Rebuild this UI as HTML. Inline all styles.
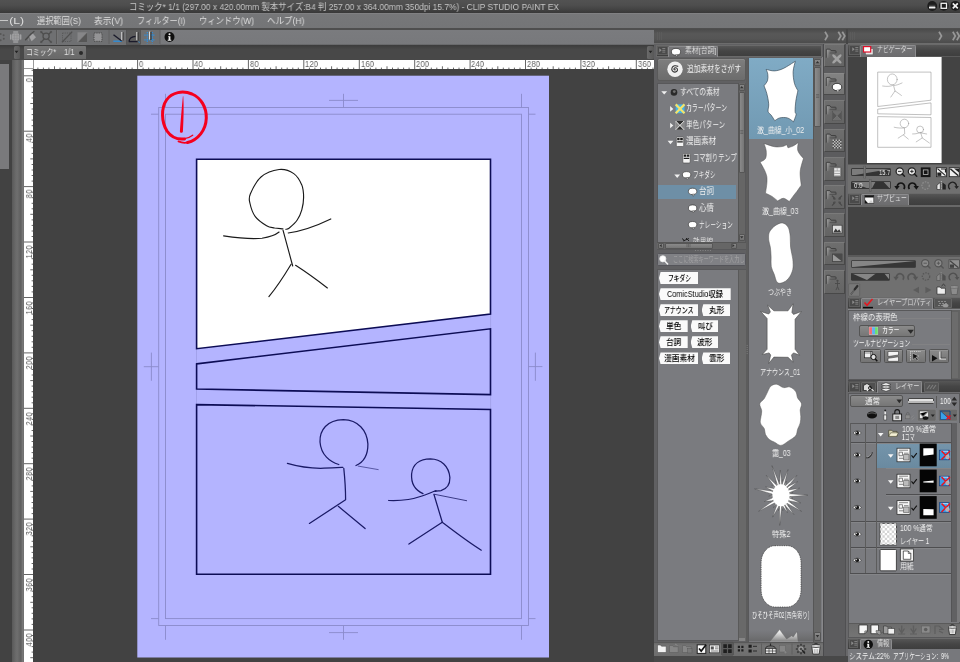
<!DOCTYPE html>
<html lang="ja"><head><meta charset="utf-8"><title>CLIP STUDIO PAINT EX</title>
<style>
*{box-sizing:border-box;margin:0;padding:0}
html,body{width:960px;height:662px;overflow:hidden;background:#424242}
body{font-family:"Liberation Sans","Noto Sans CJK JP",sans-serif;font-size:9px;color:#e4e4e4;position:relative}
.a{position:absolute}
.t{position:absolute;white-space:nowrap;line-height:1;transform-origin:0 0;will-change:transform}
#app{position:absolute;left:0;top:0;width:960px;height:662px;overflow:hidden;background:#424242}
svg{position:absolute;overflow:visible}
</style></head><body><div id="app">
<!-- title bar -->
<div class="a" style="left:0;top:0;width:960px;height:13px;background:linear-gradient(#525252,#4e4e4e 40%,#424242 75%,#383838)"></div>
<div class="t" style="left: 129px; top: 1.5px; font-size: 9.5px; color: rgb(198, 198, 198); transform: scaleX(0.8828);">コミック* 1/1 (297.00 x 420.00mm 製本サイズ:B4 判 257.00 x 364.00mm 350dpi 15.7%) - CLIP STUDIO PAINT EX</div>
<!-- window controls -->
<svg class="a" style="left:900px;top:0" width="60" height="13" viewBox="900 0 60 13">
 <circle cx="932.2" cy="6" r="4.900" fill="#1c1c1c"></circle><rect x="929" y="6.600" width="6.400" height="1.800" rx="0.500" fill="#f2f2f2"></rect><path d="M929 5.300h6.400" stroke="#555" stroke-width="0.700"></path>
 <circle cx="943.800" cy="5.800" r="4.900" fill="#1c1c1c"></circle><rect x="941.100" y="3.300" width="5.400" height="5" fill="none" stroke="#f2f2f2" stroke-width="1.300"></rect>
 <circle cx="955.300" cy="5.800" r="4.900" fill="#1c1c1c"></circle><path d="M952.800 3.300l5 5M957.800 3.300l-5 5" stroke="#f2f2f2" stroke-width="1.700"></path>
</svg>
<!-- menu bar -->
<div class="a" style="left:0;top:13px;width:960px;height:15px;background:linear-gradient(#868688,#767779 9%,#747577)"></div>
<div class="t m" style="left: -3px; top: 16.8px; font-size: 9.2px; color: rgb(222, 222, 222); transform: scaleX(1.3221);">ー(L)</div>
<div class="t m" style="left: 37px; top: 16.8px; font-size: 9.2px; color: rgb(222, 222, 222); transform: scaleX(0.898);">選択範囲(S)</div>
<div class="t m" style="left: 94px; top: 16.8px; font-size: 9.2px; color: rgb(222, 222, 222); transform: scaleX(0.9469);">表示(V)</div>
<div class="t m" style="left: 136.5px; top: 16.8px; font-size: 9.2px; color: rgb(222, 222, 222); transform: scaleX(0.8909);">フィルター(I)</div>
<div class="t m" style="left: 199px; top: 16.8px; font-size: 9.2px; color: rgb(222, 222, 222); transform: scaleX(0.9056);">ウィンドウ(W)</div>
<div class="t m" style="left: 266.5px; top: 16.8px; font-size: 9.2px; color: rgb(222, 222, 222); transform: scaleX(0.9299);">ヘルプ(H)</div>
<!-- toolbar -->
<div class="a" style="left:0;top:28px;width:960px;height:17px;background:linear-gradient(#5a5a5a,#7a7b7e 12%,#78797c 94%,#5c5c5e)"></div>
<!-- toolbar lines + icons -->
<div class="a" style="left:0;top:29.5px;width:160px;height:15px;background:#6f7072"></div>
<div class="a" style="left:0;top:28px;width:960px;height:1.5px;background:#4e4e4e"></div>
<div class="a" style="left:0;top:44.5px;width:654px;height:1.5px;background:#454545"></div>
<svg style="left:0;top:28px" width="200" height="18" viewBox="0 28 200 18">
<!-- partial dots -->
<g fill="#565656"><circle cx="0.6" cy="34" r="1"></circle><circle cx="3.6" cy="35.2" r="1"></circle><circle cx="3.8" cy="38.8" r="1"></circle><circle cx="0.6" cy="40.300" r="1"></circle></g>
<!-- select all -->
<g fill="#a0a0a2"><rect x="12" y="33.3" width="7.4" height="7.4" rx="1.6"></rect><rect x="13" y="31.3" width="5.4" height="1.5" rx="0.7"></rect><rect x="13" y="41.2" width="5.4" height="1.5" rx="0.7"></rect><rect x="10" y="34.3" width="1.5" height="5.4" rx="0.7"></rect><rect x="19.9" y="34.3" width="1.5" height="5.4" rx="0.7"></rect></g>
<path d="M12.5 35.7h6.4M12.5 38.300h6.4M14.400 33.800v6.400M17 33.800v6.400" stroke="#88888a" stroke-width="0.5"></path>
<!-- bucket -->
<path d="M25.600 39.800L31.200 33.800" stroke="#4a4a4a" stroke-width="1.5" stroke-linecap="round"></path>
<path d="M29.300 36.800L32.800 33.500L36 37.300L31.600 41.300Z" fill="#a2a2a4"></path>
<path d="M31.800 33.300L34 31.500" stroke="#4a4a4a" stroke-width="1.2" stroke-linecap="round"></path>
<path d="M28.800 38.500c-0.800 1.200-0.600 2.200 0.300 2.500" stroke="#8a8a8a" stroke-width="1" fill="none"></path>
<!-- transform X -->
<g stroke="#4e4e4e" stroke-width="1.3" fill="none" stroke-linecap="round"><path d="M41 31.800L51.200 42.200M51.200 31.800L41 42.200"></path><circle cx="46.100" cy="36.300" r="3.100" fill="#6f7072"></circle></g>
<path d="M40.600 31.400h1.800M40.600 31.400v1.800M51.600 31.400h-1.800M51.600 31.400v1.800M40.600 42.600h1.800M40.600 42.600v-1.800M51.600 42.600h-1.800M51.600 42.600v-1.800" stroke="#545454" stroke-width="0.700"></path>
<!-- separator -->
<path d="M56.500 30v14" stroke="#5a5a5a" stroke-width="1"></path><path d="M57.500 30v14" stroke="#787878" stroke-width="0.6"></path>
<!-- deselect -->
<rect x="62.500" y="33" width="8.500" height="8.500" fill="none" stroke="#585858" stroke-width="0.9" stroke-dasharray="1.2 1"></rect>
<path d="M62 42.300L72.200 31.600" stroke="#505050" stroke-width="1.3"></path>
<!-- invert -->
<rect x="77.500" y="32.300" width="9.500" height="9.800" fill="#868688"></rect>
<path d="M87 32.300V42.100H77.500Z" fill="#565656"></path>
<path d="M77.500 42.100L87 32.300" stroke="#8a8a8a" stroke-width="0.8"></path>
<!-- dotted square -->
<rect x="94" y="33" width="8" height="8.300" fill="#949496" stroke="#4a4a4a" stroke-width="1" stroke-dasharray="1.300 1"></rect>
<path d="M109 30v14" stroke="#5e5e5e" stroke-width="0.8"></path>
<!-- snap ruler -->
<path d="M113.300 41.200H122" stroke="#2b8fe0" stroke-width="1.300"></path>
<path d="M113.500 34.800L121.800 41" stroke="#1a1a2a" stroke-width="1.400"></path>
<path d="M122 32V40.300" stroke="#e8e8e8" stroke-width="1.300"></path><path d="M123 32.200V40.500" stroke="#222" stroke-width="0.900"></path>
<!-- snap special ruler (active) -->
<rect x="126.500" y="29.800" width="14" height="14.700" fill="#5a5a5a" stroke="#4c4c4c" stroke-width="0.600"></rect>
<path d="M129 41.300C129.500 38.500 131.800 36.600 135.500 36.400" stroke="#1a1a2a" stroke-width="1.300" fill="none"></path>
<path d="M128.800 41.600H137.500" stroke="#1a1a2a" stroke-width="1.300"></path>
<path d="M137 32V40.300" stroke="#e8e8e8" stroke-width="1.300"></path><path d="M138 32.200V40.500" stroke="#222" stroke-width="0.900"></path>
<path d="M138.500 41.800l1.200 0.600" stroke="#2b8fe0" stroke-width="1"></path>
<!-- snap grid -->
<g stroke="#2b8fe0" stroke-width="1.200" stroke-dasharray="1.300 0.900"><path d="M144.300 35.200H155M144.300 39.800H155M147.300 32V43.500M152.300 32V43.500"></path></g>
<path d="M149.800 31.500V39.500" stroke="#e8e8e8" stroke-width="1.400"></path><path d="M150.900 31.700V40" stroke="#1a1a1a" stroke-width="1"></path>
<path d="M160 30v14" stroke="#5e5e5e" stroke-width="0.800"></path>
<!-- info -->
<circle cx="169.500" cy="37" r="5" fill="#0e0e0e"></circle>
<circle cx="169.500" cy="34.300" r="1" fill="#f4f4f4"></circle>
<path d="M168.300 36.200h2.100v3.600h0.900v0.900h-3.600v-0.900h0.900v-2.700h-0.600z" fill="#f4f4f4"></path>
</svg>
<!-- left collapsed palette -->
<div class="a" style="left:0;top:45px;width:24px;height:617px;background:#424242"></div>
<div class="a" style="left:0;top:64px;width:9.2px;height:104.7px;background:#7a7a7c"></div>
<div class="a" style="left:12px;top:59px;width:8.5px;height:603px;background:linear-gradient(90deg,#595959,#6c6c6c 45%,#6e6e6e 60%,#5e5e5e)"></div>
<div class="a" style="left:20.5px;top:59px;width:3.5px;height:603px;background:linear-gradient(90deg,#4c4c4c,#767676 25%,#767676 80%,#5a5a5a)"></div>
<div class="a" style="left:0;top:45px;width:654px;height:15px;background:linear-gradient(#3c3c3c,#484848 30%,#484848)"></div>
<div class="a" style="left:24px;top:46px;width:62px;height:13px;background:linear-gradient(#767676,#686868);border-radius:1px 1px 0 0"></div>
<div class="t" style="left: 26.2px; top: 48.3px; font-size: 8.3px; color: rgb(224, 224, 224); transform: scaleX(0.8237);">コミック*</div>
<div class="t" style="left: 64px; top: 48.3px; font-size: 8.3px; color: rgb(224, 224, 224); transform: scaleX(0.9093);">1/1</div>
<div class="a" style="left:78.5px;top:50.5px;width:4px;height:4px;border-radius:50%;background:#2a2a2a"></div>
<div class="a" style="left:13.5px;top:46px;width:6px;height:13px;background:linear-gradient(90deg,#6a6a6a,#585858);border-radius:1.5px"></div>
<svg style="left:14px;top:50px" width="5" height="4"><path d="M0.6 0.8h3.8L2.5 3.2z" fill="#222"></path></svg>
<div class="a" style="left:647px;top:46px;width:7px;height:13px;background:linear-gradient(90deg,#6a6a6a,#585858);border-radius:1.5px"></div>
<svg style="left:648px;top:50px" width="5" height="4"><path d="M0.6 0.8h3.8L2.5 3.2z" fill="#222"></path></svg>
<div class="a" style="left:24px;top:60px;width:630px;height:9px;background:#fff"></div>
<div class="a" style="left:24px;top:60px;width:9px;height:602px;background:#fff"></div>
<svg style="left:0;top:0" width="960" height="662" shape-rendering="crispEdges"><path d="M33 60v9M24 68.8h9" stroke="#9a9a9a" stroke-width="1" fill="none"></path><path d="M37.9 67.6v1.4M43.4 67.6v1.4M48.9 67.6v1.4M54.5 66.3v2.7M60.0 67.6v1.4M65.6 67.6v1.4M71.1 67.6v1.4M76.6 67.6v1.4M82.2 60v9M87.7 67.6v1.4M93.3 67.6v1.4M98.8 67.6v1.4M104.4 67.6v1.4M109.9 66.3v2.7M115.4 67.6v1.4M121.0 67.6v1.4M126.5 67.6v1.4M132.1 67.6v1.4M137.6 60v9M143.1 67.6v1.4M148.7 67.6v1.4M154.2 67.6v1.4M159.8 67.6v1.4M165.3 66.3v2.7M170.8 67.6v1.4M176.4 67.6v1.4M181.9 67.6v1.4M187.5 67.6v1.4M193.0 60v9M198.6 67.6v1.4M204.1 67.6v1.4M209.6 67.6v1.4M215.2 67.6v1.4M220.7 66.3v2.7M226.3 67.6v1.4M231.8 67.6v1.4M237.3 67.6v1.4M242.9 67.6v1.4M248.4 60v9M254.0 67.6v1.4M259.5 67.6v1.4M265.1 67.6v1.4M270.6 67.6v1.4M276.1 66.3v2.7M281.7 67.6v1.4M287.2 67.6v1.4M292.8 67.6v1.4M298.3 67.6v1.4M303.8 60v9M309.4 67.6v1.4M314.9 67.6v1.4M320.5 67.6v1.4M326.0 67.6v1.4M331.6 66.3v2.7M337.1 67.6v1.4M342.6 67.6v1.4M348.2 67.6v1.4M353.7 67.6v1.4M359.3 60v9M364.8 67.6v1.4M370.3 67.6v1.4M375.9 67.6v1.4M381.4 67.6v1.4M387.0 66.3v2.7M392.5 67.6v1.4M398.1 67.6v1.4M403.6 67.6v1.4M409.1 67.6v1.4M414.7 60v9M420.2 67.6v1.4M425.8 67.6v1.4M431.3 67.6v1.4M436.8 67.6v1.4M442.4 66.3v2.7M447.9 67.6v1.4M453.5 67.6v1.4M459.0 67.6v1.4M464.6 67.6v1.4M470.1 60v9M475.6 67.6v1.4M481.2 67.6v1.4M486.7 67.6v1.4M492.3 67.6v1.4M497.8 66.3v2.7M503.3 67.6v1.4M508.9 67.6v1.4M514.4 67.6v1.4M520.0 67.6v1.4M525.5 60v9M531.1 67.6v1.4M536.6 67.6v1.4M542.1 67.6v1.4M547.7 67.6v1.4M553.2 66.3v2.7M558.8 67.6v1.4M564.3 67.6v1.4M569.8 67.6v1.4M575.4 67.6v1.4M580.9 60v9M586.5 67.6v1.4M592.0 67.6v1.4M597.6 67.6v1.4M603.1 67.6v1.4M608.6 66.3v2.7M614.2 67.6v1.4M619.7 67.6v1.4M625.3 67.6v1.4M630.8 67.6v1.4M636.3 60v9M641.9 67.6v1.4M647.4 67.6v1.4M653.0 67.6v1.4M31.6 70.3h1.4M24 75.8h9M31.6 81.3h1.4M31.6 86.9h1.4M31.6 92.4h1.4M31.6 98.0h1.4M30.3 103.5h2.7M31.6 109.0h1.4M31.6 114.6h1.4M31.6 120.1h1.4M31.6 125.7h1.4M24 131.2h9M31.6 136.8h1.4M31.6 142.3h1.4M31.6 147.8h1.4M31.6 153.4h1.4M30.3 158.9h2.7M31.6 164.5h1.4M31.6 170.0h1.4M31.6 175.5h1.4M31.6 181.1h1.4M24 186.6h9M31.6 192.2h1.4M31.6 197.7h1.4M31.6 203.3h1.4M31.6 208.8h1.4M30.3 214.3h2.7M31.6 219.9h1.4M31.6 225.4h1.4M31.6 231.0h1.4M31.6 236.5h1.4M24 242.0h9M31.6 247.6h1.4M31.6 253.1h1.4M31.6 258.7h1.4M31.6 264.2h1.4M30.3 269.8h2.7M31.6 275.3h1.4M31.6 280.8h1.4M31.6 286.4h1.4M31.6 291.9h1.4M24 297.5h9M31.6 303.0h1.4M31.6 308.5h1.4M31.6 314.1h1.4M31.6 319.6h1.4M30.3 325.2h2.7M31.6 330.7h1.4M31.6 336.3h1.4M31.6 341.8h1.4M31.6 347.3h1.4M24 352.9h9M31.6 358.4h1.4M31.6 364.0h1.4M31.6 369.5h1.4M31.6 375.0h1.4M30.3 380.6h2.7M31.6 386.1h1.4M31.6 391.7h1.4M31.6 397.2h1.4M31.6 402.8h1.4M24 408.3h9M31.6 413.8h1.4M31.6 419.4h1.4M31.6 424.9h1.4M31.6 430.5h1.4M30.3 436.0h2.7M31.6 441.5h1.4M31.6 447.1h1.4M31.6 452.6h1.4M31.6 458.2h1.4M24 463.7h9M31.6 469.3h1.4M31.6 474.8h1.4M31.6 480.3h1.4M31.6 485.9h1.4M30.3 491.4h2.7M31.6 497.0h1.4M31.6 502.5h1.4M31.6 508.0h1.4M31.6 513.6h1.4M24 519.1h9M31.6 524.7h1.4M31.6 530.2h1.4M31.6 535.8h1.4M31.6 541.3h1.4M30.3 546.8h2.7M31.6 552.4h1.4M31.6 557.9h1.4M31.6 563.5h1.4M31.6 569.0h1.4M24 574.5h9M31.6 580.1h1.4M31.6 585.6h1.4M31.6 591.2h1.4M31.6 596.7h1.4M30.3 602.3h2.7M31.6 607.8h1.4M31.6 613.3h1.4M31.6 618.9h1.4M31.6 624.4h1.4M24 630.0h9M31.6 635.5h1.4M31.6 641.0h1.4M31.6 646.6h1.4M31.6 652.1h1.4M30.3 657.7h2.7" stroke="#555" stroke-width="0.9" fill="none" shape-rendering="auto"></path></svg>
<div class="t" style="left:83.4px;top:60.1px;font-size:8.7px;color:#606060;letter-spacing:0.3px;transform:scaleX(0.860)">40</div>
<div class="t" style="left:138.8px;top:60.1px;font-size:8.7px;color:#606060;letter-spacing:0.3px;transform:scaleX(0.860)">0</div>
<div class="t" style="left:194.2px;top:60.1px;font-size:8.7px;color:#606060;letter-spacing:0.3px;transform:scaleX(0.860)">40</div>
<div class="t" style="left:249.6px;top:60.1px;font-size:8.7px;color:#606060;letter-spacing:0.3px;transform:scaleX(0.860)">80</div>
<div class="t" style="left:305.0px;top:60.1px;font-size:8.7px;color:#606060;letter-spacing:0.3px;transform:scaleX(0.860)">120</div>
<div class="t" style="left:360.5px;top:60.1px;font-size:8.7px;color:#606060;letter-spacing:0.3px;transform:scaleX(0.860)">160</div>
<div class="t" style="left:415.9px;top:60.1px;font-size:8.7px;color:#606060;letter-spacing:0.3px;transform:scaleX(0.860)">200</div>
<div class="t" style="left:471.3px;top:60.1px;font-size:8.7px;color:#606060;letter-spacing:0.3px;transform:scaleX(0.860)">240</div>
<div class="t" style="left:526.7px;top:60.1px;font-size:8.7px;color:#606060;letter-spacing:0.3px;transform:scaleX(0.860)">280</div>
<div class="t" style="left:582.1px;top:60.1px;font-size:8.7px;color:#606060;letter-spacing:0.3px;transform:scaleX(0.860)">320</div>
<div class="t" style="left:637.5px;top:60.1px;font-size:8.7px;color:#606060;letter-spacing:0.3px;transform:scaleX(0.860)">360</div>
<div class="t" style="left:25.2px;top:77.0px;font-size:8.7px;color:#606060;letter-spacing:0.3px;transform:rotate(-90deg) translate(-100%,0) scaleX(0.860);transform-origin:0 0">0</div>
<div class="t" style="left:25.2px;top:132.4px;font-size:8.7px;color:#606060;letter-spacing:0.3px;transform:rotate(-90deg) translate(-100%,0) scaleX(0.860);transform-origin:0 0">40</div>
<div class="t" style="left:25.2px;top:187.8px;font-size:8.7px;color:#606060;letter-spacing:0.3px;transform:rotate(-90deg) translate(-100%,0) scaleX(0.860);transform-origin:0 0">80</div>
<div class="t" style="left:25.2px;top:243.2px;font-size:8.7px;color:#606060;letter-spacing:0.3px;transform:rotate(-90deg) translate(-100%,0) scaleX(0.860);transform-origin:0 0">120</div>
<div class="t" style="left:25.2px;top:298.7px;font-size:8.7px;color:#606060;letter-spacing:0.3px;transform:rotate(-90deg) translate(-100%,0) scaleX(0.860);transform-origin:0 0">160</div>
<div class="t" style="left:25.2px;top:354.1px;font-size:8.7px;color:#606060;letter-spacing:0.3px;transform:rotate(-90deg) translate(-100%,0) scaleX(0.860);transform-origin:0 0">200</div>
<div class="t" style="left:25.2px;top:409.5px;font-size:8.7px;color:#606060;letter-spacing:0.3px;transform:rotate(-90deg) translate(-100%,0) scaleX(0.860);transform-origin:0 0">240</div>
<div class="t" style="left:25.2px;top:464.9px;font-size:8.7px;color:#606060;letter-spacing:0.3px;transform:rotate(-90deg) translate(-100%,0) scaleX(0.860);transform-origin:0 0">280</div>
<div class="t" style="left:25.2px;top:520.3px;font-size:8.7px;color:#606060;letter-spacing:0.3px;transform:rotate(-90deg) translate(-100%,0) scaleX(0.860);transform-origin:0 0">320</div>
<div class="t" style="left:25.2px;top:575.7px;font-size:8.7px;color:#606060;letter-spacing:0.3px;transform:rotate(-90deg) translate(-100%,0) scaleX(0.860);transform-origin:0 0">360</div>
<div class="t" style="left:25.2px;top:631.2px;font-size:8.7px;color:#606060;letter-spacing:0.3px;transform:rotate(-90deg) translate(-100%,0) scaleX(0.860);transform-origin:0 0">400</div>
<!-- page -->
<svg style="left:0;top:0" width="960" height="662" viewBox="0 0 960 662">
<defs><clipPath id="cv"><rect x="33" y="69" width="621" height="593"></rect></clipPath></defs>
<g clip-path="url(#cv)">
<rect x="137.3" y="75.7" width="411.7" height="581.8" fill="#b4b4ff"></rect>
<!-- crop/guide lines -->
<g fill="none" stroke="#8a8acb" stroke-width="0.9">
<rect x="158.7" y="107.5" width="369.8" height="518"></rect>
<rect x="165.5" y="114.2" width="356" height="504.4"></rect>
<path d="M165.5 93.8V107.5M151 114.2H158.7M521.5 93.8V107.5M528.5 114.2H535.5M165.5 625.5V639.8M151 618.6H158.7M521.5 625.5V639.8M528.5 618.6H535.5"></path>
<path d="M343.5 93.8V107.5M329 100.4H358M343.5 625.5V639.8M329 632.6H358M143.8 366.7H158.7M151.4 352.6V380.8M528.5 366.6H542.4M535.4 352.6V380.8"></path>
</g>
<!-- frame folder faint edges -->
<path d="M196.5 349V363.5M196.5 390V404.5M490.6 314V328M490.6 395.5V409" stroke="#9d9de6" stroke-width="0.8" fill="none"></path>
<!-- panel 1 -->
<path d="M196.6 159.3H490.5V314.1L196.6 348.7Z" fill="#fff" stroke="#0c0c55" stroke-width="1.6" stroke-linejoin="miter"></path>
<!-- panel 2 -->
<path d="M196.6 363.9L490.5 328.8V394.6L196.6 389Z" fill="none" stroke="#0c0c55" stroke-width="1.6"></path>
<!-- panel 3 -->
<path d="M196.6 404.6L490.5 409.5V574.3H196.6Z" fill="none" stroke="#0c0c55" stroke-width="1.6"></path>
<!-- figure 1 -->
<g fill="none" stroke="#1a1a1a" stroke-width="1.15" stroke-linecap="round" stroke-linejoin="round">
<path d="M282.9 228.9C281.6 228.7 277.3 228.5 274.6 228.0C271.8 227.4 269.8 227.6 266.6 225.7C263.4 223.8 258.1 220.4 255.3 216.6C252.5 212.9 250.7 206.8 249.9 203.0C249.0 199.3 248.5 198.3 250.3 194.0C252.2 189.6 256.2 181.1 261.0 177.0C265.8 172.9 273.6 170.1 279.1 169.5C284.6 168.9 290.0 171.0 293.8 173.6C297.6 176.2 300.1 181.0 301.8 184.9C303.4 188.9 303.6 193.2 303.6 197.4C303.6 201.5 302.8 206.1 301.8 209.8C300.7 213.6 299.3 217.0 297.2 220.0C295.1 223.1 291.2 226.4 289.3 228.0C287.4 229.5 286.5 229.1 285.9 229.3"></path>
<path d="M223.600 235.900C238 238 251 239.300 262 238.200C270 237 276 234.500 279.100 232"></path>
<path d="M288.200 233C298 231.500 312 228 330.800 218.900"></path>
<path d="M283 230.200L292.700 266"></path>
<path d="M291.100 264.200C284 276 276 288 268.900 296.600"></path>
<path d="M295.600 265.300C306 272 317 280 327.400 288"></path>
</g>
<!-- figure 2 & 3 -->
<g fill="none" stroke="#1a1a66" stroke-width="1.25" stroke-linecap="round" stroke-linejoin="round">
<path d="M338.800 464.500C330 462 321 455 320 442C319.500 430 327 420 343.300 419.600C358 420 367 430 367.900 444C368 454 364 462 356 465.500"></path>
<path d="M287.400 463.400C298 466.500 311 468.600 324 468.200C332 468 338 467.600 342.900 467.300"></path>
<path d="M358.200 466.100L378.200 469.600" stroke-width="0.6"></path>
<path d="M343.800 468.400C345 480 345.600 490 345.600 499.800L309.400 523.400"></path>
<path d="M338.300 506.300L365.100 528.500"></path>
<path d="M423 493.600C415 490 411 483 411.600 474C412.500 464 420 459 430.400 458.800C441 459 449 466 449.900 477.600C450 484 447 489 441 490.600C438.500 491 436.500 490.500 435 491.400"></path>
<path d="M388.700 500.500C400 501 412 499.500 422 496C428 494 432 492 436.100 490.700"></path>
<path d="M434.500 494.300L466.600 500.700" stroke-width="0.8"></path>
<path d="M433.900 494.300L442.300 522.300"></path>
<path d="M442.300 522.300L408.900 544.100"></path>
<path d="M442.300 522.300C455 532 468 542 481.300 550.200"></path>
</g>
<!-- red page number -->
<g fill="none" stroke="#f5001e" stroke-linecap="round">
<path d="M192.700 135.200C190 137.300 187 138.600 183.500 138.900" stroke-width="1.300"></path>
<path d="M184.500 138.900C177 139.700 171 137 167 131C161.300 122 161 108 166.500 100C172 92 183 90.300 192 94C201 98 206.500 107 206.300 118C206 130 198 140 187.500 142.500" stroke-width="3"></path>
<path d="M188 142.400C184.500 143.200 181.500 142.800 178.500 141.400" stroke-width="1.800"></path>
</g>
<path d="M182.900 96.300C181.900 106 180.600 122 179.900 131.500C179.900 133.200 182.800 133.200 182.900 131.500C183.700 118 183.900 106 183.300 96.300Z" fill="#f5001e"></path>
</g>
</svg>
<!-- ===== material dock ===== -->
<div class="a" style="left:654px;top:29px;width:194px;height:633px;background:#5a5a5a"></div>
<div class="a" style="left:654px;top:29px;width:193px;height:13.5px;background:linear-gradient(#4a4a4a,#585858 35%,#555 70%,#4c4c4c)"></div>
<div class="a" style="left:654px;top:42.5px;width:193px;height:1.5px;background:#6c6c6c"></div>
<svg style="left:654px;top:29px" width="193" height="14" viewBox="654 29 193 14"><path d="M657.500 32v8M659.500 32v8M661.500 32v8" stroke="#5e5e5e" stroke-width="0.700"></path><path d="M825 31.800l2.500 4.200l-2.500 4.200" stroke="#989898" stroke-width="1.700" fill="none"></path><path d="M838.300 31.800l2.500 4.200l-2.500 4.200M842.300 31.800l2.500 4.200l-2.500 4.200" stroke="#989898" stroke-width="1.700" fill="none"></path></svg>
<div class="a" style="left:654px;top:44px;width:168.5px;height:612px;background:#606062"></div>
<div class="a" style="left:655.5px;top:44.5px;width:166px;height:12px;background:linear-gradient(#565656,#454545 50%,#3e3e3e);border:0.5px solid #6a6a6a"></div>
<div class="a" style="left:656.5px;top:45.5px;width:11px;height:9.500px;background:#4a4a4a;border:0.5px solid #5e5e5e"></div>
<svg style="left:657px;top:46px" width="10" height="9" viewBox="0 0 10 9"><path d="M2.300 2.300l2.300 2l-2.300 2z" fill="#8e8e8e"></path><path d="M5.300 2.500h3M5.300 4.300h3M5.300 6.100h3" stroke="#8e8e8e" stroke-width="0.800"></path></svg>
<div class="a" style="left:668px;top:45.500px;width:49.5px;height:11.5px;background:linear-gradient(#767678,#6c6c6e);border-radius:1.500px 1.500px 0 0;border:0.6px solid #8c8c8e;border-bottom:none"></div>
<svg style="left:670px;top:47px" width="12" height="11" viewBox="0 0 12 11"><ellipse cx="6" cy="4.800" rx="4.600" ry="3.400" fill="#fff" stroke="#333" stroke-width="0.700"></ellipse><path d="M5.500 7.800l1.300 2l1-2.200z" fill="#fff" stroke="#333" stroke-width="0.500"></path></svg>
<div class="t" style="left: 684.5px; top: 47.3px; font-size: 7.8px; color: rgb(220, 220, 220); transform: scaleX(0.8865);">素材[台詞]</div>
<div class="a" style="left:656.500px;top:58px;width:89px;height:23px;background:linear-gradient(#7e7e7e,#6c6c6c);border:1px solid #5a5a5a;border-radius:2.500px;box-shadow:inset 0 1px 0 #8a8a8a"></div>
<svg style="left:666px;top:61px" width="18" height="17" viewBox="0 0 18 17"><circle cx="9" cy="8.300" r="7.700" fill="#f0f0f0"></circle><path d="M9.300 8.800c-0.900 0.500-1.700-0.400-1.200-1.300c0.700-1.200 2.600-1 3.200 0.400c0.700 1.700-0.700 3.300-2.500 3.200c-2.200-0.100-3.600-2.200-2.800-4.200c0.900-2.200 3.800-2.800 5.800-1.600" stroke="#333" stroke-width="1.100" fill="none" stroke-linecap="round"></path></svg>
<div class="t" style="left: 687px; top: 64.9px; font-size: 9px; color: rgb(242, 242, 242); transform: scaleX(0.7498);">追加素材をさがす</div>
<div class="a" style="left:656.5px;top:82.5px;width:89.500px;height:167px;background:#7a7b7f;border:0.5px solid #58585a;overflow:hidden"></div>
<div class="a" style="left:658.2px;top:184.800px;width:77.700px;height:14.400px;background:#6e8fa6"></div>
<div class="a" style="left:657px;top:83px;width:80.500px;height:158px;overflow:hidden">
<div class="t" style="left: 23px; top: 4.7px; font-size: 8.6px; color: rgb(240, 240, 240); transform: scaleX(0.7822);">すべての素材</div>
<div class="t" style="left: 28.7px; top: 21.2px; font-size: 8.6px; color: rgb(240, 240, 240); transform: scaleX(0.6875);">カラーパターン</div>
<div class="t" style="left: 29px; top: 37.8px; font-size: 8.6px; color: rgb(240, 240, 240); transform: scaleX(0.7665);">単色パターン</div>
<div class="t" style="left: 29.4px; top: 54.3px; font-size: 8.6px; color: rgb(240, 240, 240); transform: scaleX(0.8752);">漫画素材</div>
<div class="t" style="left: 35.6px; top: 70.8px; font-size: 8.6px; color: rgb(240, 240, 240); transform: scaleX(0.7299);">コマ割りテンプレ</div>
<div class="t" style="left: 35.6px; top: 88px; font-size: 8.6px; color: rgb(240, 240, 240); transform: scaleX(0.6539);">フキダシ</div>
<div class="t" style="left: 42.3px; top: 104.4px; font-size: 8.6px; color: rgb(240, 240, 240); transform: scaleX(0.8661);">台詞</div>
<div class="t" style="left: 42.3px; top: 121.2px; font-size: 8.6px; color: rgb(240, 240, 240); transform: scaleX(0.8661);">心情</div>
<div class="t" style="left: 42.3px; top: 137.8px; font-size: 8.6px; color: rgb(240, 240, 240); transform: scaleX(0.6556);">ナレーション</div>
</div>
<svg style="left:0;top:0" width="960" height="662" viewBox="0 0 960 662"><path d="M661.3 91.2h5.800l-2.900 3.400z" fill="#f0f0f0"></path><circle cx="674" cy="92.400" r="3.300" fill="#2a2a2a"></circle><circle cx="674.300" cy="91.600" r="1.400" fill="#707070"></circle><path d="M670.1 106.1v5.600l3.200-2.800z" fill="#f0f0f0"></path><rect x="675.700" y="104.400" width="8.800" height="8.800" fill="#3fb4ee"></rect><path d="M675.700 104.400l8.800 8.800M684.500 104.400l-8.800 8.800" stroke="#f4e36a" stroke-width="2.200"></path><path d="M670.1 122.7v5.600l3.200-2.800z" fill="#f0f0f0"></path><rect x="675.700" y="121" width="8.400" height="8.800" fill="#ececec"></rect><path d="M675.700 121h8.400l-4.200 4.400zM675.700 129.800h8.400l-4.200-4.400z" fill="#2e2e2e"></path><path d="M675.700 121l4.200 4.400l-4.200 4.400zM684.100 121l-4.200 4.400l4.200 4.400z" fill="#8a8a8a"></path><path d="M675.700 121l8.400 8.800M684.100 121l-8.400 8.800" stroke="#e8e8e8" stroke-width="0.900"></path><path d="M667.6 140.8h5.800l-2.900 3.400z" fill="#f0f0f0"></path><rect x="676.3" y="137.1" width="7.400" height="9.400" rx="1" fill="#f4f4f4" stroke="#444" stroke-width="0.600"></rect><path d="M677.2 138.1h2.400v2.200h-2.400zM680.2 138.1h2.600v2.200h-2.600zM677.2 141.2h5.600v1.300h-5.600z" fill="#1e1e1e"></path><rect x="682.8" y="153.6" width="7.400" height="9.400" rx="1" fill="#f4f4f4" stroke="#444" stroke-width="0.600"></rect><path d="M683.7 154.6h2.400v2.200h-2.400zM686.7 154.6h2.600v2.200h-2.600zM683.7 157.7h5.600v1.300h-5.600z" fill="#1e1e1e"></path><path d="M674.3 174.5h5.800l-2.900 3.400z" fill="#f0f0f0"></path><ellipse cx="686.6" cy="174.8" rx="4.200" ry="3.200" fill="#fff" stroke="#3a3a3a" stroke-width="0.700"></ellipse><path d="M686.1 177.7l1.200 2l1.100-2.300z" fill="#fff" stroke="#3a3a3a" stroke-width="0.500"></path><ellipse cx="692.6" cy="191.4" rx="4.200" ry="3.200" fill="#fff" stroke="#3a3a3a" stroke-width="0.700"></ellipse><path d="M692.1 194.3l1.200 2l1.100-2.300z" fill="#fff" stroke="#3a3a3a" stroke-width="0.500"></path><ellipse cx="692.6" cy="208.1" rx="4.200" ry="3.200" fill="#fff" stroke="#3a3a3a" stroke-width="0.700"></ellipse><path d="M692.1 211.0l1.200 2l1.100-2.300z" fill="#fff" stroke="#3a3a3a" stroke-width="0.500"></path><ellipse cx="692.6" cy="224.7" rx="4.200" ry="3.200" fill="#fff" stroke="#3a3a3a" stroke-width="0.700"></ellipse><path d="M692.1 227.6l1.200 2l1.100-2.300z" fill="#fff" stroke="#3a3a3a" stroke-width="0.500"></path><path d="M682 238.500l3 2.500M686 238l3 3M689 238.500l-6 2.500" stroke="#222" stroke-width="1"></path></svg>
<div class="t" style="left: 692.6px; top: 236.5px; font-size: 9.5px; color: rgb(220, 220, 220); clip-path: inset(0px 0px 55%); transform: scaleX(0.7014);">効果線</div>
<div class="a" style="left:737.800px;top:83px;width:7.700px;height:158.500px;background:#666;border-left:0.5px solid #565656"></div>
<div class="a" style="left:738.500px;top:84px;width:6.500px;height:6.500px;background:linear-gradient(#888,#707070);border:0.5px solid #555;border-radius:1px"></div>
<div class="a" style="left:738.500px;top:91.500px;width:6.500px;height:81px;background:linear-gradient(90deg,#8a8a8a,#767676);border:0.5px solid #565656;border-radius:1px"></div>
<div class="a" style="left:738.500px;top:234px;width:6.500px;height:6.500px;background:linear-gradient(#888,#707070);border:0.5px solid #555;border-radius:1px"></div>
<svg style="left:738px;top:83px" width="8" height="160" viewBox="738 83 8 160"><path d="M740 88.300l1.750-2.200l1.750 2.200z" fill="#333"></path><path d="M740 236.300l1.750 2.200l1.750-2.200z" fill="#333"></path><path d="M740.300 130.500h3M740.300 132h3M740.300 133.500h3" stroke="#555" stroke-width="0.600"></path></svg>
<div class="a" style="left:657px;top:241.700px;width:88.500px;height:7.600px;background:#666;border-top:0.5px solid #565656"></div>
<div class="a" style="left:657.500px;top:242.500px;width:6px;height:6.200px;background:linear-gradient(#888,#707070);border:0.5px solid #555;border-radius:1px"></div>
<div class="a" style="left:665px;top:242.500px;width:48.300px;height:6.200px;background:linear-gradient(#8a8a8a,#767676);border:0.5px solid #565656;border-radius:1px"></div>
<div class="a" style="left:730.500px;top:242.500px;width:6px;height:6.200px;background:linear-gradient(#888,#707070);border:0.5px solid #555;border-radius:1px"></div>
<svg style="left:657px;top:241px" width="90" height="9" viewBox="657 241 90 9"><path d="M661.700 243.900l-2.200 1.700l2.200 1.700z" fill="#333"></path><path d="M732.400 243.900l2.200 1.700l-2.200 1.700z" fill="#333"></path><path d="M687 244v3.200M688.500 244v3.200M690 244v3.200" stroke="#555" stroke-width="0.600"></path><path d="M695 250.500h1M697.500 250.500h1M700 250.500h1M702.500 250.500h1M705 250.500h1M707.500 250.500h1M710 250.500h1" stroke="#8a8a8a" stroke-width="0.800"></path></svg>
<div class="a" style="left:656.700px;top:252.500px;width:89.300px;height:13.700px;background:#808185;border:0.5px solid #55555a;border-radius:1.500px"></div>
<svg style="left:658px;top:254px" width="12" height="12" viewBox="0 0 12 12"><circle cx="4.800" cy="4.800" r="3.100" fill="#fff" stroke="#e8e8e8" stroke-width="0.800"></circle><path d="M7 7.200l2.600 2.800" stroke="#f0f0f0" stroke-width="1.600" stroke-linecap="round"></path></svg>
<div class="a" style="left:672px;top:253px;width:73.500px;height:13px;overflow:hidden"><div class="t" style="left: 0.6px; top: 2.6px; font-size: 8px; color: rgb(160, 160, 162); transform: scaleX(0.6384);">ここに検索キーワードを入力し</div></div>
<div class="a" style="left:656.700px;top:269.300px;width:89.300px;height:372px;background:#7a7b7f;border:0.5px solid #58585a"></div>
<div class="a" style="left:738.300px;top:269.800px;width:7.400px;height:371px;background:#696969;border-left:0.5px solid #5a5a5a"></div>
<div class="a" style="left:739px;top:638px;width:6.300px;height:3px;background:#858585"></div>
<div class="a" style="left:659.0px;top:272.1px;width:39.3px;height:11.800px;background:#fafafa;clip-path:polygon(1.600px 0,100% 0,100% 100%,1.600px 100%,0 50%)"></div>
<div class="t" style="left: 667.6px; top: 273.9px; font-size: 8.4px; color: rgb(0, 0, 0); font-weight: 500; transform: scaleX(0.6831);">フキダシ</div>
<div class="a" style="left:659.0px;top:288.2px;width:71.7px;height:11.800px;background:#fafafa;clip-path:polygon(1.600px 0,100% 0,100% 100%,1.600px 100%,0 50%)"></div>
<div class="t" style="left: 667.4px; top: 290px; font-size: 8.4px; color: rgb(0, 0, 0); font-weight: 500; transform: scaleX(0.8718);">ComicStudio収録</div>
<div class="a" style="left:659.0px;top:304.2px;width:39.3px;height:11.800px;background:#fafafa;clip-path:polygon(1.600px 0,100% 0,100% 100%,1.600px 100%,0 50%)"></div>
<div class="t" style="left: 664.4px; top: 306px; font-size: 8.4px; color: rgb(0, 0, 0); font-weight: 500; transform: scaleX(0.71);">アナウンス</div>
<div class="a" style="left:701.7px;top:304.2px;width:28.3px;height:11.800px;background:#fafafa;clip-path:polygon(1.600px 0,100% 0,100% 100%,1.600px 100%,0 50%)"></div>
<div class="t" style="left: 708.7px; top: 306px; font-size: 8.4px; color: rgb(0, 0, 0); font-weight: 500; transform: scaleX(0.9194);">丸形</div>
<div class="a" style="left:659.0px;top:320.3px;width:28.7px;height:11.800px;background:#fafafa;clip-path:polygon(1.600px 0,100% 0,100% 100%,1.600px 100%,0 50%)"></div>
<div class="t" style="left: 666.1px; top: 322.1px; font-size: 8.4px; color: rgb(0, 0, 0); font-weight: 500; transform: scaleX(0.9194);">単色</div>
<div class="a" style="left:690.7px;top:320.3px;width:27.6px;height:11.800px;background:#fafafa;clip-path:polygon(1.600px 0,100% 0,100% 100%,1.600px 100%,0 50%)"></div>
<div class="t" style="left: 697.5px; top: 322.1px; font-size: 8.4px; color: rgb(0, 0, 0); font-weight: 500; transform: scaleX(0.8955);">叫び</div>
<div class="a" style="left:659.0px;top:336.3px;width:28.7px;height:11.800px;background:#fafafa;clip-path:polygon(1.600px 0,100% 0,100% 100%,1.600px 100%,0 50%)"></div>
<div class="t" style="left: 666.1px; top: 338.1px; font-size: 8.4px; color: rgb(0, 0, 0); font-weight: 500; transform: scaleX(0.9194);">台詞</div>
<div class="a" style="left:690.7px;top:336.3px;width:27.6px;height:11.800px;background:#fafafa;clip-path:polygon(1.600px 0,100% 0,100% 100%,1.600px 100%,0 50%)"></div>
<div class="t" style="left: 697.3px; top: 338.1px; font-size: 8.4px; color: rgb(0, 0, 0); font-weight: 500; transform: scaleX(0.9194);">波形</div>
<div class="a" style="left:659.0px;top:352.4px;width:39.3px;height:11.800px;background:#fafafa;clip-path:polygon(1.600px 0,100% 0,100% 100%,1.600px 100%,0 50%)"></div>
<div class="t" style="left: 663.6px; top: 354.2px; font-size: 8.4px; color: rgb(0, 0, 0); font-weight: 500; transform: scaleX(0.9254);">漫画素材</div>
<div class="a" style="left:701.7px;top:352.4px;width:28.3px;height:11.800px;background:#fafafa;clip-path:polygon(1.600px 0,100% 0,100% 100%,1.600px 100%,0 50%)"></div>
<div class="t" style="left: 708.7px; top: 354.2px; font-size: 8.4px; color: rgb(0, 0, 0); font-weight: 500; transform: scaleX(0.9194);">雲形</div>
<div class="a" style="left:746.300px;top:57.500px;width:1.800px;height:584px;background:#5c5c5c"></div>
<svg style="left:746px;top:344px" width="3" height="12" viewBox="0 0 3 12"><path d="M1.200 1v1M1.200 3v1M1.200 5v1M1.200 7v1M1.200 9v1" stroke="#8a8a8a" stroke-width="0.700"></path></svg>
<!-- thumbnails -->
<div class="a" style="left:748px;top:57.500px;width:74px;height:584px;background:#7a7b7f;border-left:0.5px solid #58585a"></div>
<div class="a" style="left:748.900px;top:58.200px;width:63.900px;height:80.800px;background:linear-gradient(#80abc5,#7199b2)"></div>
<svg style="left:0;top:0" width="960" height="662" viewBox="0 0 960 662"><defs><clipPath id="tl"><rect x="748.500" y="58" width="65" height="583.300"></rect></clipPath><linearGradient id="fade" x1="0" y1="0" x2="0" y2="1"><stop offset="0" stop-color="#6a6a6a" stop-opacity="0"></stop><stop offset="1" stop-color="#626262" stop-opacity="0.800"></stop></linearGradient></defs><g clip-path="url(#tl)"><path d="M766.2 69.4C767.6 69.6 771.6 71.1 774.5 70.9C777.4 70.7 780.0 70.0 783.5 68.4C787.0 66.7 793.4 62.4 795.3 61.2L795.3 61.2C795.0 62.9 793.3 68.0 793.1 71.7C793.0 75.4 793.6 80.1 794.4 83.2C795.2 86.4 797.3 89.4 797.9 90.7L797.9 90.7C797.5 92.4 796.3 97.7 795.8 101.2C795.4 104.7 795.0 109.2 795.1 111.5C795.1 113.7 796.3 113.0 796.1 114.7C795.8 116.4 794.0 120.6 793.5 121.8L793.5 121.8C792.5 121.1 789.7 118.5 787.4 117.9C785.1 117.3 781.8 117.4 779.7 117.9C777.6 118.4 775.6 120.3 774.8 120.7L774.8 120.7C774.2 119.8 772.4 116.9 771.3 115.3C770.2 113.8 768.5 113.4 768.1 111.5C767.7 109.6 769.0 106.8 768.7 103.8C768.5 100.8 767.6 96.5 766.8 93.5C766.0 90.5 764.5 87.1 764.0 85.8L764.0 85.8C764.6 85.0 766.8 82.6 767.5 80.7C768.1 78.7 768.1 76.1 767.8 74.3C767.6 72.4 766.5 70.2 766.2 69.4Z" fill="#fff" stroke="#2a3a48" stroke-width="0.600" stroke-linejoin="miter"></path><path d="M764.0 143.4C765.8 143.9 771.5 146.2 774.5 146.7C777.6 147.2 780.2 146.8 782.2 146.5C784.3 146.1 786.0 145.0 786.7 144.7L786.7 144.7C786.9 145.2 787.8 147.2 788.0 147.8L788.0 147.8C788.9 147.5 791.4 146.8 793.1 146.0C794.9 145.1 797.4 143.1 798.3 142.5L798.3 142.5C798.2 143.9 797.0 148.2 797.9 150.8C798.7 153.5 802.5 157.3 803.4 158.5L803.4 158.5C802.9 160.7 800.6 166.9 800.2 171.4C799.8 175.8 801.1 182.9 801.2 185.2L801.2 185.2C800.5 186.2 798.1 189.7 797.0 191.3C795.9 192.8 795.7 192.8 794.4 194.5C793.1 196.2 790.1 200.4 789.3 201.5L789.3 201.5C788.3 201.0 785.4 198.4 783.5 198.3C781.6 198.2 778.7 200.5 777.7 200.9L777.7 200.9C776.8 200.2 774.0 197.7 772.0 196.4C769.9 195.1 766.6 193.7 765.5 193.2L765.5 193.2C765.8 190.4 767.7 181.7 766.8 176.5C765.9 171.3 761.3 164.5 760.1 162.1L760.1 162.1C761.0 161.5 764.5 160.4 765.5 158.5C766.5 156.7 766.4 153.4 766.2 150.8C765.9 148.3 764.4 144.6 764.0 143.4Z" fill="#fff" stroke="#555" stroke-width="0.500" stroke-linejoin="miter"></path><path d="M782.2 222.9C784.4 223.1 786.7 224.8 788.0 227.0C789.3 229.2 789.8 232.5 790.2 236.0C790.6 239.4 790.1 243.7 790.6 247.5C791.0 251.4 792.4 255.4 792.8 259.1C793.1 262.7 793.4 266.1 792.8 269.3C792.1 272.6 790.4 276.1 788.6 278.3C786.9 280.6 784.2 282.2 782.2 282.8C780.3 283.5 778.4 283.6 777.1 282.2C775.8 280.8 775.2 277.1 774.3 274.5C773.3 271.9 771.9 269.8 771.3 266.8C770.8 263.8 771.2 259.7 771.1 256.5C770.9 253.3 770.8 250.3 770.4 247.5C770.0 244.7 768.9 242.4 768.7 239.8C768.6 237.3 768.3 234.5 769.4 232.1C770.5 229.8 773.0 227.2 775.2 225.7C777.3 224.2 780.1 222.7 782.2 222.9Z" fill="#fff" stroke="#555" stroke-width="0.500"></path><path d="M773.9 310.8L788.0 310.8L793.1 303.8L791.9 312.4L793.5 314.4L801.5 311.5L795.1 319.2L795.1 349.3L799.6 355.1L793.5 352.9L791.5 355.1L793.1 362.2L788.0 357.3L773.9 357.1L768.7 363.5L770.7 355.1L769.1 352.9L762.3 354.5L767.1 349.3L767.1 318.5L760.7 311.5L768.7 314.0L770.4 311.9L767.5 305.1Z" fill="#fff" stroke="#4a4a4a" stroke-width="0.600" stroke-linejoin="miter"></path><path d="M776.5 384.2C778.6 384.4 781.3 387.2 783.5 387.6C785.8 388.1 787.9 386.3 789.9 387.0C792.0 387.6 794.4 389.7 795.7 391.5C797.0 393.3 796.7 395.9 797.6 397.9C798.6 399.9 801.1 401.6 801.5 403.7C801.9 405.7 800.3 408.0 800.2 410.1C800.1 412.2 800.8 414.4 800.8 416.5C800.8 418.7 800.7 420.8 800.2 422.9C799.7 425.1 798.4 427.2 797.6 429.3C796.9 431.5 797.2 433.8 795.7 435.8C794.2 437.7 791.1 439.3 788.6 440.9C786.2 442.5 783.3 445.2 780.9 445.4C778.6 445.6 776.5 443.1 774.5 442.2C772.6 441.2 770.9 440.9 769.4 439.6C767.9 438.3 766.4 436.3 765.5 434.5C764.7 432.7 765.1 430.6 764.3 428.7C763.4 426.8 760.9 425.0 760.4 422.9C759.9 420.9 760.8 418.5 761.0 416.5C761.3 414.5 761.9 412.9 761.7 410.7C761.5 408.6 759.3 405.7 759.8 403.7C760.2 401.6 763.0 400.5 764.3 398.5C765.5 396.6 766.4 394.2 767.5 392.1C768.5 390.1 769.2 387.7 770.7 386.3C772.2 385.0 774.3 383.9 776.5 384.2Z" fill="#fff" stroke="#5a5a5a" stroke-width="0.500"></path><path d="M772.0 493.9L754.6 488.8L772.5 491.2L772.7 491.8L769.6 489.6L773.1 490.7L772.6 491.0L765.5 486.9L773.6 488.5L774.2 488.4L771.8 485.0L774.7 487.6L774.8 486.8L766.2 475.3L776.5 485.2L776.7 485.6L775.5 481.3L777.5 485.1L777.3 484.7L772.0 465.7L779.4 483.9L779.1 484.4L779.0 479.8L780.0 484.2L779.6 483.8L780.3 470.2L781.8 483.7L781.6 484.2L782.4 479.7L782.4 484.3L782.3 483.8L788.0 469.6L784.3 484.5L784.5 485.1L786.5 481.3L785.3 485.6L785.7 485.4L797.0 475.3L787.4 487.2L786.7 487.0L789.5 484.2L787.3 487.8L787.2 486.9L797.6 481.7L788.6 489.1L788.2 489.2L791.5 487.5L788.6 490.2L788.9 489.9L799.6 488.2L789.7 492.5L789.3 492.7L792.9 492.4L789.5 493.8L789.9 493.8L807.9 495.2L789.9 496.6L789.5 496.7L792.9 498.1L789.3 497.8L789.7 498.1L800.8 502.9L788.9 500.7L788.6 500.2L791.5 502.9L788.2 501.2L788.6 501.2L801.5 511.3L787.3 503.4L787.1 503.0L789.2 506.7L786.5 503.7L786.8 504.0L793.8 514.5L785.0 505.5L785.2 504.8L786.5 509.1L784.5 505.3L785.1 505.5L787.4 512.6L783.0 506.5L782.7 506.1L782.8 510.6L781.9 506.3L781.6 506.7L779.7 525.4L779.5 506.6L779.6 506.2L778.5 510.5L778.8 506.0L778.8 506.4L772.6 517.1L776.8 505.4L776.0 504.3L773.5 507.6L775.3 503.7L774.3 503.0L758.5 511.3L773.1 500.8L773.6 501.0L770.3 502.6L773.2 500.0L773.0 500.6L764.3 501.6L772.2 498.1L772.4 496.5L768.8 496.2L772.3 495.4Z" fill="#fff" stroke="#3a3a3a" stroke-width="0.350" stroke-linejoin="miter"></path><rect x="761.100" y="545.700" width="39.900" height="61.300" rx="14" ry="17" fill="#fff" stroke="#333" stroke-width="0.800" stroke-dasharray="0.900 0.900"></rect><path d="M769.500 642L779.600 629.600L786.600 639L791.700 635.800L793.200 637L796.900 631.700L798.200 642Z" fill="#fff" stroke="#666" stroke-width="0.400"></path><rect x="749" y="630" width="64.500" height="11.500" fill="url(#fade)"></rect></g></svg>
<div class="t" style="left: 756.8px; top: 125.7px; font-size: 8.3px; color: rgb(240, 240, 240); transform: scaleX(0.8353);">激_曲線_小_02</div>
<div class="t" style="left: 762px; top: 207.3px; font-size: 8.3px; color: rgb(240, 240, 240); transform: scaleX(0.8418);">激_曲線_03</div>
<div class="t" style="left: 768.3px; top: 288.1px; font-size: 8.3px; color: rgb(240, 240, 240); transform: scaleX(0.7228);">つぶやき</div>
<div class="t" style="left: 760.3px; top: 368.1px; font-size: 8.3px; color: rgb(240, 240, 240); transform: scaleX(0.7273);">アナウンス_01</div>
<div class="t" style="left: 771.5px; top: 449.2px; font-size: 8.3px; color: rgb(240, 240, 240); transform: scaleX(0.8356);">靄_03</div>
<div class="t" style="left: 771.5px; top: 530.4px; font-size: 8.3px; color: rgb(240, 240, 240); transform: scaleX(0.8719);">特殊2</div>
<div class="t" style="left: 751.9px; top: 611px; font-size: 8.3px; color: rgb(240, 240, 240); transform: scaleX(0.6429);">ひそひそ声02(四角寄り)</div>
<div class="a" style="left:813.300px;top:57.500px;width:8.200px;height:584px;background:#676767;border-left:0.5px solid #565656"></div>
<div class="a" style="left:814px;top:58.500px;width:7px;height:7px;background:linear-gradient(#8a8a8a,#727272);border:0.5px solid #555;border-radius:1px"></div>
<div class="a" style="left:814px;top:67px;width:7px;height:59.500px;background:linear-gradient(90deg,#8c8c8c,#767676);border:0.5px solid #565656;border-radius:1px"></div>
<div class="a" style="left:814px;top:632px;width:7px;height:8.500px;background:linear-gradient(#8a8a8a,#727272);border:0.5px solid #555;border-radius:1px"></div>
<svg style="left:813px;top:57px" width="9" height="585" viewBox="813 57 9 585"><path d="M815.700 63.300l1.800-2.400l1.800 2.400z" fill="#333"></path><path d="M815.700 635l1.800 2.400l1.800-2.400z" fill="#333"></path><path d="M816 94.500h3.200M816 96h3.200M816 97.500h3.200" stroke="#555" stroke-width="0.600"></path></svg>
<div class="a" style="left:654px;top:641.500px;width:168.500px;height:14.500px;background:linear-gradient(#6a6a6a,#747474 20%,#6e6e6e);border-top:0.5px solid #585858"></div>
<div class="a" style="left:654px;top:656px;width:194px;height:6px;background:#484848"></div>
<svg style="left:654px;top:641px" width="170" height="16" viewBox="654 641 170 16"><path d="M657.500 645h3l1 1.200h4.700v6.300h-8.700z" fill="#f2f2f2" stroke="#444" stroke-width="0.500"></path><path d="M669.500 645.500h3l1 1.200h4.700v5.800h-8.700z" fill="#868686" stroke="#5a5a5a" stroke-width="0.500"></path><path d="M675 644l2.500 1.500" stroke="#8a8a8a" stroke-width="1"></path><path d="M682.500 645.500h3l1 1.200h4.700v5.800h-8.700z" fill="#868686" stroke="#5a5a5a" stroke-width="0.500"></path><rect x="687.500" y="648.500" width="4.500" height="4.500" fill="#7a7a7a" stroke="#5a5a5a" stroke-width="0.500"></rect><rect x="697.200" y="644.800" width="8.600" height="8.600" fill="#fafafa" stroke="#222" stroke-width="1"></rect><path d="M699 648.500l2.200 2.600l4.800-6.400" stroke="#111" stroke-width="1.600" fill="none"></path><rect x="709.500" y="645" width="10" height="7.800" fill="#f4f4f4" stroke="#333" stroke-width="0.700"></rect><rect x="710.800" y="646.500" width="3" height="3" fill="#555"></rect><path d="M715 647h3.500M715 648.800h3.500M711 651h7.500" stroke="#555" stroke-width="0.700"></path><rect x="721.500" y="642.300" width="12" height="13" fill="#5a5a5a" stroke="#4a4a4a" stroke-width="0.500" rx="1"></rect><path d="M723.300 644.300h3.600v3.800h-3.600zM728.100 644.300h3.600v3.800h-3.600zM723.300 649.300h3.600v3.800h-3.600zM728.100 649.300h3.600v3.800h-3.600z" fill="#1e1e1e"></path><path d="M737.800 645.800h2.200v2.200h-2.200zM741.300 645.800h2.200v2.200h-2.200zM737.800 649.300h2.200v2.200h-2.200zM741.300 649.300h2.200v2.200h-2.200z" fill="#1e1e1e"></path><path d="M748.500 644.800h3.200v3h-3.200zM748.500 649.500h3.200v3h-3.200z" fill="#1e1e1e"></path><path d="M753 646.300h4M753 651h4" stroke="#2a2a2a" stroke-width="1"></path><path d="M761.500 643.500v11" stroke="#5a5a5a" stroke-width="0.800"></path><path d="M765.500 648.500c0-3.500 10-3.500 10 0" fill="none" stroke="#2a2a2a" stroke-width="0.900"></path><rect x="765.500" y="648.500" width="10.500" height="5" fill="#e8e8e8" stroke="#2a2a2a" stroke-width="0.700"></rect><path d="M769 648.500v5M772.500 648.500v5M765.500 651h10.500" stroke="#2a2a2a" stroke-width="0.600"></path><path d="M770.500 643.500v2.500" stroke="#2a2a2a" stroke-width="1.200"></path><rect x="779.500" y="645.500" width="6" height="6.500" fill="#858585" stroke="#606060" stroke-width="0.500"></rect><path d="M783 650.500c2 0 3 1 3 2.500l-1.500-0.500" stroke="#8a8a8a" stroke-width="0.900" fill="none"></path><path d="M792 643.500v11" stroke="#5a5a5a" stroke-width="0.800"></path><path d="M804.2 649.0L806.2 649.0M803.3 651.3L804.7 652.7M801.0 652.2L801.0 654.2M798.7 651.3L797.3 652.7M797.8 649.0L795.8 649.0M798.7 646.7L797.3 645.3M801.0 645.8L801.0 643.8M803.3 646.7L804.7 645.3" stroke="#3a3a3a" stroke-width="1.700"></path><circle cx="801" cy="649" r="3.400" fill="#9a9a9a" stroke="#3a3a3a" stroke-width="0.900"></circle><circle cx="801" cy="649" r="1.300" fill="#4a4a4a"></circle><path d="M802 650l3 3.500" stroke="#222" stroke-width="1.200"></path><path d="M811.800 646.500h8.400l-1 7.500h-6.400z" fill="#f4f4f4" stroke="#2a2a2a" stroke-width="0.800"></path><ellipse cx="816" cy="646" rx="4.600" ry="1.500" fill="#dcdcdc" stroke="#2a2a2a" stroke-width="0.800"></ellipse><path d="M814 644.500c0-1.500 4-1.500 4 0" stroke="#2a2a2a" stroke-width="0.800" fill="none"></path><path d="M814.300 649v4M816 649v4M817.700 649v4" stroke="#777" stroke-width="0.500"></path></svg>
<!-- ===== icon column ===== -->
<div class="a" style="left:822.5px;top:44.0px;width:25.0px;height:612.0px;background:#5c5c5e"></div>
<div class="a" style="left:823.5px;top:43.6px;width:21.0px;height:23.8px;background:linear-gradient(#6e6e6e,#646464);border:0.5px solid #7a7a7a;border-right-color:#484848;border-bottom-color:#484848;border-radius:1px"></div>
<div class="a" style="left:822.0px;top:72.9px;width:22.5px;height:22.2px;background:linear-gradient(#828282,#747474);border:0.5px solid #8a8a8a;border-right-color:#4a4a4a;border-bottom-color:#4a4a4a;border-radius:1.500px"></div>
<div class="a" style="left:823.5px;top:100.2px;width:21.0px;height:23.8px;background:linear-gradient(#6e6e6e,#646464);border:0.5px solid #7a7a7a;border-right-color:#484848;border-bottom-color:#484848;border-radius:1px"></div>
<div class="a" style="left:823.5px;top:128.5px;width:21.0px;height:23.8px;background:linear-gradient(#6e6e6e,#646464);border:0.5px solid #7a7a7a;border-right-color:#484848;border-bottom-color:#484848;border-radius:1px"></div>
<div class="a" style="left:823.5px;top:156.8px;width:21.0px;height:23.8px;background:linear-gradient(#6e6e6e,#646464);border:0.5px solid #7a7a7a;border-right-color:#484848;border-bottom-color:#484848;border-radius:1px"></div>
<div class="a" style="left:823.5px;top:185.1px;width:21.0px;height:23.8px;background:linear-gradient(#6e6e6e,#646464);border:0.5px solid #7a7a7a;border-right-color:#484848;border-bottom-color:#484848;border-radius:1px"></div>
<div class="a" style="left:823.5px;top:213.2px;width:21.0px;height:23.8px;background:linear-gradient(#6e6e6e,#646464);border:0.5px solid #7a7a7a;border-right-color:#484848;border-bottom-color:#484848;border-radius:1px"></div>
<div class="a" style="left:823.5px;top:241.5px;width:21.0px;height:23.8px;background:linear-gradient(#6e6e6e,#646464);border:0.5px solid #7a7a7a;border-right-color:#484848;border-bottom-color:#484848;border-radius:1px"></div>
<div class="a" style="left:823.5px;top:269.8px;width:21.0px;height:23.8px;background:linear-gradient(#6e6e6e,#646464);border:0.5px solid #7a7a7a;border-right-color:#484848;border-bottom-color:#484848;border-radius:1px"></div>
<svg style="left:0;top:0" width="960" height="662" viewBox="0 0 960 662"><defs><linearGradient id="fg" x1="0" y1="0" x2="1" y2="0.300"><stop offset="0" stop-color="#a6a6a6"></stop><stop offset="0.450" stop-color="#707070"></stop><stop offset="1" stop-color="#606060"></stop></linearGradient></defs><path d="M826.6 57.7V49.5h3.400l1.200 1.500h4.600v1.600l-4.200 1.200l-2.600 4.300z" fill="url(#fg)"></path><path d="M826.3 57.7V49.8q0-0.700 0.700-0.700h2.900l1.200 1.500h4.200q0.700 0 0.700 0.700v1.800" fill="none" stroke="#3a3a3a" stroke-width="0.850"></path><path d="M829.5 53.0h6.500" stroke="#4a4a4a" stroke-width="0.700"></path><ellipse cx="840.00" cy="58.90" rx="3.100" ry="1.350" transform="rotate(45 836.90 58.90)" fill="#a2a2a2"></ellipse><ellipse cx="840.00" cy="58.90" rx="3.100" ry="1.350" transform="rotate(135 836.90 58.90)" fill="#a2a2a2"></ellipse><ellipse cx="840.00" cy="58.90" rx="3.100" ry="1.350" transform="rotate(225 836.90 58.90)" fill="#a2a2a2"></ellipse><ellipse cx="840.00" cy="58.90" rx="3.100" ry="1.350" transform="rotate(315 836.90 58.90)" fill="#a2a2a2"></ellipse><path d="M826.6 86.0V77.8h3.400l1.200 1.500h4.600v1.600l-4.200 1.200l-2.600 4.300z" fill="url(#fg)"></path><path d="M826.3 86.0V78.1q0-0.700 0.700-0.700h2.900l1.200 1.500h4.200q0.700 0 0.700 0.700v1.800" fill="none" stroke="#3a3a3a" stroke-width="0.850"></path><path d="M829.5 81.3h6.500" stroke="#4a4a4a" stroke-width="0.700"></path><ellipse cx="837.0" cy="87.0" rx="4.800" ry="3.700" fill="#fff" stroke="#2a2a2a" stroke-width="0.900"></ellipse><path d="M836.5 90.2l1.500 2.200l1-2.600z" fill="#fff" stroke="#333" stroke-width="0.400"></path><path d="M826.6 114.3V106.1h3.400l1.200 1.500h4.600v1.600l-4.200 1.200l-2.600 4.300z" fill="url(#fg)"></path><path d="M826.3 114.3V106.4q0-0.700 0.700-0.700h2.900l1.200 1.500h4.200q0.700 0 0.700 0.700v1.800" fill="none" stroke="#3a3a3a" stroke-width="0.850"></path><path d="M829.5 109.6h6.500" stroke="#4a4a4a" stroke-width="0.700"></path><rect x="832.5" y="111.2" width="9" height="9" fill="#8a8a8a" stroke="#4a4a4a" stroke-width="0.500"></rect><path d="M832.5 111.2l4.500 4.500l-4.500 4.500zM841.5 111.2l-4.500 4.500l4.500 4.500z" fill="#555"></path><path d="M832.5 111.2h9l-4.500 4.500zM832.5 120.2h9l-4.500-4.500z" fill="#6e6e6e"></path><path d="M826.6 142.6V134.4h3.400l1.200 1.500h4.600v1.600l-4.200 1.200l-2.600 4.300z" fill="url(#fg)"></path><path d="M826.3 142.6V134.7q0-0.700 0.700-0.700h2.900l1.200 1.500h4.200q0.700 0 0.700 0.700v1.800" fill="none" stroke="#3a3a3a" stroke-width="0.850"></path><path d="M829.5 137.9h6.500" stroke="#4a4a4a" stroke-width="0.700"></path><rect x="832.5" y="139.5" width="9" height="9" fill="#4e4e4e"></rect><path d="M832.50 139.50h1.500v1.500h-1.500zM835.50 139.50h1.500v1.500h-1.500zM838.50 139.50h1.500v1.500h-1.500zM834.00 141.00h1.500v1.500h-1.500zM837.00 141.00h1.500v1.500h-1.500zM840.00 141.00h1.500v1.500h-1.500zM832.50 142.50h1.500v1.500h-1.500zM835.50 142.50h1.500v1.500h-1.500zM838.50 142.50h1.500v1.500h-1.500zM834.00 144.00h1.500v1.500h-1.500zM837.00 144.00h1.500v1.500h-1.500zM840.00 144.00h1.500v1.500h-1.500zM832.50 145.50h1.500v1.500h-1.500zM835.50 145.50h1.500v1.500h-1.500zM838.50 145.50h1.500v1.500h-1.500zM834.00 147.00h1.500v1.500h-1.500zM837.00 147.00h1.500v1.500h-1.500zM840.00 147.00h1.500v1.500h-1.500z" fill="#bdbdbd"></path><path d="M826.6 170.9V162.7h3.400l1.200 1.500h4.600v1.600l-4.200 1.200l-2.600 4.300z" fill="url(#fg)"></path><path d="M826.3 170.9V163.0q0-0.700 0.700-0.700h2.900l1.200 1.500h4.200q0.700 0 0.700 0.700v1.800" fill="none" stroke="#3a3a3a" stroke-width="0.850"></path><path d="M829.5 166.2h6.500" stroke="#4a4a4a" stroke-width="0.700"></path><rect x="833.5" y="167.3" width="7.500" height="9.500" rx="0.800" fill="#a8a8a8" stroke="#444" stroke-width="0.500"></rect><path d="M834.4 168.3h2.400v2.200h-2.400zM837.6 168.3h2.400v2.200h-2.400zM834.4 171.5h5.600v1.400h-5.600zM834.4 173.9h5.600v1.400h-5.600z" fill="#e8e8e8"></path><path d="M826.6 199.2V191.0h3.400l1.200 1.500h4.600v1.600l-4.200 1.200l-2.600 4.300z" fill="url(#fg)"></path><path d="M826.3 199.2V191.3q0-0.700 0.700-0.700h2.900l1.200 1.500h4.200q0.700 0 0.700 0.700v1.800" fill="none" stroke="#3a3a3a" stroke-width="0.850"></path><path d="M829.5 194.5h6.500" stroke="#4a4a4a" stroke-width="0.700"></path><path d="M832.0 195.6l3.200 3.200M842.0 195.6l-3.200 3.200M832.0 205.6l3.200-3.200M842.0 205.6l-3.200-3.200" stroke="#4a4a4a" stroke-width="1.300"></path><path d="M835.6 199.2h-2v-2M838.4 199.2h2v-2M835.6 202.0h-2v2M838.4 202.0h2v2" stroke="#4a4a4a" stroke-width="0.900" fill="none"></path><path d="M826.6 227.3V219.1h3.400l1.200 1.500h4.600v1.600l-4.200 1.200l-2.600 4.300z" fill="url(#fg)"></path><path d="M826.3 227.3V219.4q0-0.700 0.700-0.700h2.900l1.200 1.500h4.200q0.700 0 0.700 0.700v1.800" fill="none" stroke="#3a3a3a" stroke-width="0.850"></path><path d="M829.5 222.6h6.500" stroke="#4a4a4a" stroke-width="0.700"></path><rect x="832.5" y="225.2" width="9.500" height="8" fill="#dedede" stroke="#3a3a3a" stroke-width="0.700"></rect><path d="M833.2 232.5l2.500-4l2 2.500l1.500-1.800l2 3.300z" fill="#3a3a3a"></path><path d="M826.6 255.6V247.4h3.400l1.200 1.500h4.600v1.600l-4.200 1.200l-2.600 4.300z" fill="url(#fg)"></path><path d="M826.3 255.6V247.7q0-0.700 0.700-0.700h2.900l1.200 1.500h4.200q0.700 0 0.700 0.700v1.800" fill="none" stroke="#3a3a3a" stroke-width="0.850"></path><path d="M829.5 250.9h6.500" stroke="#4a4a4a" stroke-width="0.700"></path><rect x="832.5" y="254.0" width="9.500" height="7.500" fill="#9a9a9a" stroke="#3a3a3a" stroke-width="0.700"></rect><path d="M842.0 261.5v-7.500h-9.500z" fill="#4a4a4a"></path><path d="M826.6 283.9V275.7h3.400l1.200 1.500h4.600v1.600l-4.200 1.200l-2.600 4.300z" fill="url(#fg)"></path><path d="M826.3 283.9V276.0q0-0.700 0.700-0.700h2.900l1.200 1.500h4.200q0.700 0 0.700 0.700v1.800" fill="none" stroke="#3a3a3a" stroke-width="0.850"></path><path d="M829.5 279.2h6.500" stroke="#4a4a4a" stroke-width="0.700"></path><circle cx="837.5" cy="280.8" r="1.100" fill="#4a4a4a"></circle><path d="M837.5 282.1v4.500M835.0 283.5h5M837.5 286.6l-1.500 3.500M837.5 286.6l1.500 3.500" stroke="#4a4a4a" stroke-width="0.900" fill="none"></path></svg>
<div class="a" style="left:846.3px;top:29.0px;width:1.4px;height:15.0px;background:#454545"></div>
<div class="a" style="left:846.3px;top:44.0px;width:1.5px;height:612.0px;background:#68686a"></div>
<div class="a" style="left:845.3px;top:44.0px;width:1.0px;height:612.0px;background:#505052"></div>
<div class="a" style="left:822.5px;top:44.0px;width:1.0px;height:612.0px;background:#4a4a4c"></div>
<div class="a" style="left:821.6px;top:57.0px;width:1.0px;height:585.0px;background:#88888a"></div>
<!-- ===== right dock ===== -->
<div class="a" style="left:847.8px;top:29.0px;width:112.2px;height:633.0px;background:#5a5a5a"></div>
<div class="a" style="left:847.5px;top:29.0px;width:112.5px;height:13.5px;background:linear-gradient(#4a4a4a,#585858 35%,#555 70%,#4c4c4c)"></div>
<div class="a" style="left:847.5px;top:42.5px;width:112.5px;height:1.5px;background:#6c6c6c"></div>
<svg style="left:847px;top:29px" width="113" height="14" viewBox="847 29 113 14"><path d="M850.500 32v8M852.500 32v8M854.500 32v8" stroke="#5e5e5e" stroke-width="0.700"></path><path d="M939 31.800l2.500 4.200l-2.500 4.200" stroke="#989898" stroke-width="1.700" fill="none"></path><path d="M952.800 31.800l2.500 4.200l-2.500 4.200M956.800 31.800l2.500 4.200l-2.500 4.200" stroke="#989898" stroke-width="1.700" fill="none"></path></svg>
<div class="a" style="left:848.0px;top:44.2px;width:112.0px;height:12.0px;background:linear-gradient(#565656,#454545 50%,#3e3e3e);border-top:0.5px solid #6a6a6a"></div>
<div class="a" style="left:848.8px;top:45.2px;width:10.8px;height:10.0px;background:#4a4a4a;border:0.5px solid #5e5e5e"></div>
<svg style="left:849.500px;top:45.4px" width="10" height="9" viewBox="0 0 10 9"><path d="M2.300 2.300l2.300 2l-2.300 2z" fill="#8e8e8e"></path><path d="M5.300 2.500h3M5.300 4.300h3M5.300 6.100h3" stroke="#8e8e8e" stroke-width="0.800"></path></svg>
<div class="a" style="left:860.0px;top:45.0px;width:56.0px;height:11.7px;background:linear-gradient(#767678,#6c6c6e);border-radius:1.500px 1.500px 0 0;border:0.6px solid #8c8c8e;border-bottom:none"></div>
<div class="t" style="left: 877.4px; top: 46px; font-size: 7.8px; color: rgb(220, 220, 220); transform: scaleX(0.7546);">ナビゲーター</div>
<svg style="left:862px;top:45px" width="12" height="11" viewBox="0 0 12 11"><rect x="3.500" y="3.800" width="7.500" height="6" fill="#e8e8e8" stroke="#555" stroke-width="0.400"></rect><rect x="1.500" y="1.600" width="7.200" height="5.400" fill="#fff" stroke="#e0102a" stroke-width="1.200"></rect></svg>
<div class="a" style="left:848.0px;top:56.5px;width:112.0px;height:107.0px;background:#434343"></div>
<svg style="left:0;top:0" width="960" height="662" viewBox="0 0 960 662"><rect x="867" y="57" width="74.600" height="106" fill="#fff"></rect><g fill="none" stroke="#8e8e8e" stroke-width="0.550"><polygon points="877.7,72.1 931.0,72.1 931.0,100.2 877.7,106.5"></polygon><polygon points="877.7,109.2 931.0,102.9 931.0,114.8 877.7,113.8"></polygon><polygon points="877.7,116.6 931.0,117.5 931.0,147.3 877.7,147.3"></polygon></g><g fill="none" stroke="#9a9a9a" stroke-width="0.500" stroke-linecap="round" transform="translate(842.121 43.283) scale(0.18120)"><g stroke-width="3.200"><ellipse cx="276.800" cy="199.300" rx="27" ry="30"></ellipse><path d="M223.600 235.900C250 240 270 238 279.100 232M288.200 233C298 231.500 312 228 330.800 218.900M283 230.200L292.700 266M291.100 264.200L268.900 296.600M295.600 265.300L327.400 288"></path><circle cx="343.800" cy="442.500" r="23.500"></circle><path d="M287.400 463.400C310 469 330 468 342.900 467.300M343.800 468.400L345.600 499.800L309.400 523.400M338.300 506.300L365.100 528.500"></path><circle cx="430.400" cy="476" r="19"></circle><path d="M388.700 500.500C410 501 425 495 436.100 490.700M434.500 494.300L466.600 500.700M433.900 494.300L442.300 522.300L408.900 544.100M442.300 522.300L481.300 550.200"></path></g></g></svg>
<div class="a" style="left:848.0px;top:163.5px;width:112.0px;height:30.0px;background:#707070;border-top:0.5px solid #5a5a5a"></div>
<div class="a" style="left:850.8px;top:168.2px;width:40.0px;height:7.7px;background:#7c7c7c;border:0.8px solid #3c3c3c;border-radius:1px"></div>
<svg style="left:851.300px;top:168.800px" width="39" height="6.700" viewBox="0 0 39 6.700"><path d="M0 6.700L39 0V6.700z" fill="#333"></path><path d="M13.700 -3.200v12.500" stroke="#585858" stroke-width="2.400"></path><path d="M13.700 -2.800v11.700" stroke="#787878" stroke-width="1.200"></path></svg>
<div class="t" style="left: 878.6px; top: 168.7px; font-size: 7.8px; color: rgb(244, 244, 244); transform: scaleX(0.744);">15.7</div>
<div class="a" style="left:850.8px;top:181.2px;width:40.0px;height:7.7px;background:#7c7c7c;border:0.8px solid #3c3c3c;border-radius:1px"></div>
<svg style="left:851.300px;top:181.800px" width="39" height="6.700" viewBox="0 0 39 6.700"><path d="M0 0L17.500 6.700H0zM20.700 6.700L24.400 0H32.700L39 6.700z" fill="#333"></path><path d="M19.200 -3v12.500" stroke="#585858" stroke-width="2.400"></path><path d="M19.200 -2.600v11.700" stroke="#787878" stroke-width="1.200"></path></svg>
<div class="t" style="left: 854.4px; top: 181.7px; font-size: 7.8px; color: rgb(244, 244, 244); transform: scaleX(0.7746);">0.0</div>
<div class="a" style="left:848.0px;top:193.0px;width:112.0px;height:11.5px;background:linear-gradient(#565656,#454545 50%,#3e3e3e);border-top:0.5px solid #6a6a6a"></div>
<div class="a" style="left:848.8px;top:194.0px;width:10.8px;height:9.5px;background:#4a4a4a;border:0.5px solid #5e5e5e"></div>
<svg style="left:849.500px;top:194.2px" width="10" height="9" viewBox="0 0 10 9"><path d="M2.300 2.300l2.300 2l-2.300 2z" fill="#8e8e8e"></path><path d="M5.300 2.500h3M5.300 4.300h3M5.300 6.100h3" stroke="#8e8e8e" stroke-width="0.800"></path></svg>
<div class="a" style="left:861.3px;top:193.8px;width:47.6px;height:11.2px;background:linear-gradient(#767678,#6c6c6e);border-radius:1.500px 1.500px 0 0;border:0.6px solid #8c8c8e;border-bottom:none"></div>
<div class="t" style="left: 876.5px; top: 194.6px; font-size: 7.8px; color: rgb(220, 220, 220); transform: scaleX(0.7644);">サブビュー</div>
<svg style="left:863.500px;top:194px" width="11" height="10" viewBox="0 0 11 10"><rect x="0.800" y="1.300" width="9" height="8" fill="#f4f4f4" stroke="#2a2a2a" stroke-width="0.600"></rect><rect x="0.800" y="1.300" width="9" height="2.200" fill="#141414"></rect><path d="M1 9.300v-3.500l3 3.500z" fill="#141414"></path><path d="M4.500 9l2.500-3l2.500 3z" fill="#d0d0d0"></path></svg>
<div class="a" style="left:848.0px;top:204.5px;width:112.0px;height:3.0px;background:#686868"></div>
<div class="a" style="left:848.0px;top:207.3px;width:112.0px;height:48.2px;background:#434343"></div>
<div class="a" style="left:848.0px;top:255.5px;width:112.0px;height:42.3px;background:#707070;border-top:0.5px solid #5a5a5a"></div>
<div class="a" style="left:850.8px;top:260.3px;width:65.4px;height:7.6px;background:#868686;border:0.8px solid #444;border-radius:1px"></div>
<svg style="left:851.300px;top:261px" width="64.400" height="6.300" viewBox="0 0 64.400 6.300"><path d="M0 6.300L64.400 0V6.300z" fill="#363636"></path></svg>
<div class="a" style="left:850.8px;top:272.5px;width:39.7px;height:8.0px;background:#868686;border:0.8px solid #444;border-radius:1px"></div>
<svg style="left:851.300px;top:273px" width="38.700" height="7" viewBox="0 0 38.700 7"><path d="M0 0L16 7H0zM16 7L25.500 0H33L38.700 7z" fill="#363636"></path></svg>
<svg style="left:0;top:0" width="960" height="662" viewBox="0 0 960 662"><circle cx="899.7" cy="171.4" r="3.600" fill="#e8e8e8" stroke="#1e1e1e" stroke-width="1.200"></circle><path d="M902.2 173.9l2.300 2.300" stroke="#1e1e1e" stroke-width="1.500" stroke-linecap="round"></path><path d="M898.0 171.4h3.400" stroke="#1e1e1e" stroke-width="0.900"></path><circle cx="911.9" cy="171.4" r="3.600" fill="#e8e8e8" stroke="#1e1e1e" stroke-width="1.200"></circle><path d="M914.4 173.9l2.300 2.300" stroke="#1e1e1e" stroke-width="1.500" stroke-linecap="round"></path><path d="M910.2 171.4h3.400" stroke="#1e1e1e" stroke-width="0.900"></path><path d="M911.9 169.7v3.400" stroke="#1e1e1e" stroke-width="0.900"></path><rect x="920.800" y="167.400" width="9.700" height="9.700" fill="#161616"></rect><rect x="923.300" y="169.900" width="4.700" height="4.700" fill="none" stroke="#bbb" stroke-width="0.800"></rect><rect x="936.500" y="167.700" width="10" height="9" fill="#ededed" stroke="#222" stroke-width="0.800"></rect><path d="M937.500 168.700l8 7M941 169l4.500 0v3.500" stroke="#222" stroke-width="1.100" fill="none"></path><rect x="937.300" y="172.500" width="4" height="3.400" fill="#222"></rect><rect x="949.300" y="167.700" width="10" height="9" fill="#ededed" stroke="#222" stroke-width="0.800"></rect><path d="M950.300 168.700l8 7" stroke="#222" stroke-width="1.500"></path><path d="M954 168.500h5v4z" fill="#222"></path><path d="M903.8 189.0A3.700 3.700 0 1 0 897.2 186.4" stroke="#141414" stroke-width="1.700" fill="none"></path><path d="M894.3 186.0h5.400l-2.900 3.700z" fill="#141414"></path><path d="M909.4 189.0A3.700 3.700 0 1 1 916.0 186.4" stroke="#141414" stroke-width="1.700" fill="none"></path><path d="M918.9 186.0h-5.400l2.900 3.700z" fill="#141414"></path><circle cx="925.600" cy="185.600" r="3.700" fill="none" stroke="#8c8c8c" stroke-width="1.300" stroke-dasharray="1.500 1.200"></circle><path d="M941.300 181v9" stroke="#ddd" stroke-width="0.700" stroke-dasharray="1 0.800"></path><path d="M937 189.500v-4.500l3.300-2.500v7z" fill="#e8e8e8" stroke="#222" stroke-width="0.600"></path><path d="M945.800 189.500v-4.500l-3.300-2.500v7z" fill="#222"></path><path d="M950 189.300a4 4 0 1 1 6.500-3" stroke="#222" stroke-width="1.400" fill="none"></path><path d="M954.300 186.200l2.400 2.800l2.200-3z" fill="#222"></path><circle cx="925.2" cy="263.2" r="3.600" fill="#8a8a8a" stroke="#555" stroke-width="1.200"></circle><path d="M927.7 265.7l2.300 2.300" stroke="#555" stroke-width="1.500" stroke-linecap="round"></path><path d="M923.5 263.2h3.400" stroke="#555" stroke-width="0.900"></path><circle cx="938.4" cy="263.2" r="3.600" fill="#8a8a8a" stroke="#555" stroke-width="1.200"></circle><path d="M940.9 265.7l2.300 2.300" stroke="#555" stroke-width="1.500" stroke-linecap="round"></path><path d="M936.7 263.2h3.400" stroke="#555" stroke-width="0.900"></path><path d="M938.4 261.5v3.400" stroke="#555" stroke-width="0.900"></path><rect x="949" y="259.800" width="10.500" height="8.800" fill="#909090" stroke="#444" stroke-width="0.700"></rect><path d="M950 260.800l8.500 7" stroke="#444" stroke-width="1.200"></path><rect x="950" y="264.500" width="4" height="3.300" fill="#444"></rect><path d="M902.9 279.7A3.700 3.700 0 1 0 896.3 277.1" stroke="#555" stroke-width="1.700" fill="none"></path><path d="M893.4 276.7h5.400l-2.900 3.700z" fill="#555"></path><path d="M908.7 279.7A3.700 3.700 0 1 1 915.3 277.1" stroke="#555" stroke-width="1.700" fill="none"></path><path d="M918.2 276.7h-5.400l2.900 3.700z" fill="#555"></path><circle cx="926" cy="276.500" r="3.700" fill="none" stroke="#585858" stroke-width="1.300" stroke-dasharray="1.500 1.200"></circle><path d="M941.100 272v9" stroke="#999" stroke-width="0.700" stroke-dasharray="1 0.800"></path><path d="M936.800 280.500v-4.500l3.300-2.500v7z" fill="#8a8a8a" stroke="#505050" stroke-width="0.600"></path><path d="M945.600 280.500v-4.500l-3.300-2.500v7z" fill="#505050"></path><path d="M950.500 280.300a4 4 0 1 1 6.500-3" stroke="#505050" stroke-width="1.400" fill="none"></path><path d="M954.800 277.200l2.400 2.800l2.200-3z" fill="#505050"></path><rect x="848.600" y="283.700" width="11.100" height="12.600" fill="#787878" stroke="#5a5a5a" stroke-width="0.600" rx="1"></rect><path d="M850.800 294.500l4.300-5.500" stroke="#4a4a4a" stroke-width="1.600"></path><path d="M850.800 294.500l4.300-5.500" stroke="#8a8a8a" stroke-width="0.500"></path><path d="M854.800 289.300l2.600-3.300" stroke="#2e2e2e" stroke-width="2.200" stroke-linecap="round"></path><path d="M919 286.800v6.400l-6-3.200z" fill="#5c5c5c"></path><path d="M925.400 286.800v6.400l6-3.200z" fill="#5c5c5c"></path><path d="M937 287h3l1 1.200h4.400v6h-8.400z" fill="#ececec" stroke="#2a2a2a" stroke-width="0.700"></path><path d="M941.500 286l2-1.800l2 1.800" stroke="#2a2a2a" stroke-width="0.800" fill="none"></path><path d="M950.600 287.500h7.400l-0.900 7h-5.600z" fill="#8c8c8c" stroke="#585858" stroke-width="0.700"></path><ellipse cx="954.300" cy="287" rx="4" ry="1.300" fill="#999" stroke="#585858" stroke-width="0.600"></ellipse></svg>
<!-- layer property -->
<div class="a" style="left:848.0px;top:297.2px;width:112.0px;height:11.3px;background:linear-gradient(#565656,#454545 50%,#3e3e3e);border-top:0.5px solid #6a6a6a"></div>
<div class="a" style="left:848.8px;top:298.2px;width:10.8px;height:9.3px;background:#4a4a4a;border:0.5px solid #5e5e5e"></div>
<svg style="left:849.500px;top:298.4px" width="10" height="9" viewBox="0 0 10 9"><path d="M2.300 2.300l2.300 2l-2.300 2z" fill="#8e8e8e"></path><path d="M5.300 2.500h3M5.300 4.300h3M5.300 6.100h3" stroke="#8e8e8e" stroke-width="0.800"></path></svg>
<div class="a" style="left:860.6px;top:298.0px;width:72.1px;height:11.0px;background:linear-gradient(#767678,#6c6c6e);border-radius:1.500px 1.500px 0 0;border:0.6px solid #8c8c8e;border-bottom:none"></div>
<div class="t" style="left: 877.1px; top: 298.6px; font-size: 7.8px; color: rgb(220, 220, 220); transform: scaleX(0.7911);">レイヤープロパティ</div>
<svg style="left:862px;top:297.200px" width="13" height="12" viewBox="0 0 13 12"><path d="M2.500 5.500l2.500 2.800l5.500-6.300" stroke="#e8141e" stroke-width="1.500" fill="none"></path><path d="M1 10.600h10" stroke="#0a0a0a" stroke-width="1.500"></path></svg>
<div class="a" style="left:934.0px;top:298.2px;width:18.0px;height:10.3px;background:#555;border:0.5px solid #646464;border-radius:1px 1px 0 0"></div>
<svg style="left:936px;top:299.200px" width="14" height="9" viewBox="0 0 14 9"><path d="M2 2.500h9M3 4.500h9M2 6.500h9" stroke="#8a8a8a" stroke-width="1" stroke-dasharray="2 1"></path><ellipse cx="9.500" cy="6.500" rx="3" ry="1.800" fill="#9a9a9a"></ellipse></svg>
<div class="a" style="left:848.0px;top:308.5px;width:112.0px;height:2.0px;background:#88898c"></div>
<div class="a" style="left:848.0px;top:310.0px;width:112.0px;height:69.6px;background:#7a7b7f;border:0.5px solid #58585a"></div>
<div class="a" style="left:951.0px;top:310.3px;width:8.5px;height:69.0px;background:#626262;border-left:0.5px solid #565656"></div>
<div class="a" style="left:952.3px;top:311.5px;width:5.5px;height:66.0px;background:#6c6c6c"></div>
<div class="a" style="left:899.0px;top:318.3px;width:50.5px;height:0.7px;background:#828284"></div>
<div class="a" style="left:911.5px;top:344.3px;width:38.0px;height:0.7px;background:#828284"></div>
<div class="t" style="left: 853.3px; top: 313.3px; font-size: 8.5px; color: rgb(240, 240, 240); transform: scaleX(0.8723);">枠線の表現色</div>
<div class="a" style="left:858.7px;top:324.9px;width:56.5px;height:11.8px;background:linear-gradient(#8a8a8a,#767676);border:0.5px solid #555;border-radius:2px"></div>
<svg style="left:867.800px;top:326.200px" width="11" height="9.500" viewBox="0 0 11 9.500"><rect x="0.500" y="0.500" width="10" height="8.500" fill="#ddd" stroke="#555" stroke-width="0.500"></rect><rect x="1.200" y="1.200" width="2.900" height="7.100" fill="#f26e72"></rect><rect x="4.100" y="1.200" width="2.900" height="7.100" fill="#62aef2"></rect><rect x="7" y="1.200" width="2.800" height="7.100" fill="#6ee06e"></rect></svg>
<div class="t" style="left: 881.9px; top: 326.2px; font-size: 8.5px; color: rgb(244, 244, 244); transform: scaleX(0.6859);">カラー</div>
<svg style="left:907px;top:328.500px" width="8" height="6" viewBox="0 0 8 6"><path d="M0.500 0.800h6.400l-3.200 4z" fill="#2a2a2a"></path></svg>
<div class="t" style="left: 853.3px; top: 339.4px; font-size: 8.5px; color: rgb(240, 240, 240); transform: scaleX(0.6742);">ツールナビゲーション</div>
<div class="a" style="left:860.3px;top:349.4px;width:20.7px;height:13.6px;background:linear-gradient(#8a8a8a,#747474);border:0.5px solid #555;border-radius:1.500px;box-shadow:inset 0 0.500px 0 #a0a0a0"></div>
<div class="a" style="left:883.5px;top:349.4px;width:19.7px;height:13.6px;background:linear-gradient(#8a8a8a,#747474);border:0.5px solid #555;border-radius:1.500px;box-shadow:inset 0 0.500px 0 #a0a0a0"></div>
<div class="a" style="left:905.7px;top:349.4px;width:20.6px;height:13.6px;background:linear-gradient(#8a8a8a,#747474);border:0.5px solid #555;border-radius:1.500px;box-shadow:inset 0 0.500px 0 #a0a0a0"></div>
<div class="a" style="left:928.6px;top:349.4px;width:20.0px;height:13.6px;background:linear-gradient(#8a8a8a,#747474);border:0.5px solid #555;border-radius:1.500px;box-shadow:inset 0 0.500px 0 #a0a0a0"></div>
<svg style="left:0;top:0" width="960" height="662" viewBox="0 0 960 662"><rect x="864.500" y="351.300" width="7.500" height="6.500" fill="#f0f0f0" stroke="#222" stroke-width="0.700"></rect><path d="M864.500 353h6M870.500 351.300v6.500" stroke="#222" stroke-width="0.500"></path><circle cx="873.500" cy="357" r="2.600" fill="#e0e0e0" stroke="#111" stroke-width="1"></circle><path d="M875.300 359l2 2.300" stroke="#111" stroke-width="1.400"></path><path d="M888 351.500h10.500v3.500l-10.500 1.500z" fill="#f4f4f4" stroke="#222" stroke-width="0.500"></path><path d="M888 358.300l10.500-1.500v4.500h-10.500z" fill="#f4f4f4" stroke="#222" stroke-width="0.500"></path><path d="M910.500 351.500v9.500M910.500 351.500h10" stroke="#f0f0f0" stroke-width="0.700" stroke-dasharray="1 0.800"></path><path d="M912.500 353.200l6.500 3l-2.800 0.800l2 3l-1.200 0.700l-2-3l-2 2z" fill="#111" stroke="#eee" stroke-width="0.400"></path><path d="M932 355v6.500l5.500-3.200z" fill="#111"></path><path d="M940 351.500v7.500h6" stroke="#f0f0f0" stroke-width="1.200" fill="none"></path><path d="M941 351.500v6.500h5" stroke="#222" stroke-width="0.500" fill="none"></path></svg>
<!-- layer panel -->
<div class="a" style="left:848.0px;top:379.6px;width:112.0px;height:1.4px;background:#4a4a4c"></div>
<div class="a" style="left:848.0px;top:381.0px;width:112.0px;height:11.0px;background:linear-gradient(#565656,#454545 50%,#3e3e3e)"></div>
<div class="a" style="left:848.0px;top:392.0px;width:112.0px;height:1.5px;background:#6c6c6e"></div>
<div class="a" style="left:848.8px;top:381.5px;width:10.8px;height:10.0px;background:#4a4a4a;border:0.5px solid #5e5e5e"></div>
<svg style="left:849.500px;top:381.700px" width="10" height="9" viewBox="0 0 10 9"><path d="M2.300 2.300l2.300 2l-2.300 2z" fill="#8e8e8e"></path><path d="M5.300 2.500h3M5.300 4.300h3M5.300 6.100h3" stroke="#8e8e8e" stroke-width="0.800"></path></svg>
<div class="a" style="left:860.6px;top:381.5px;width:15.0px;height:10.5px;background:#505050;border:0.5px solid #666;border-radius:1px 1px 0 0"></div>
<svg style="left:862px;top:382px" width="13" height="10" viewBox="0 0 13 10"><path d="M1.500 8.500v-5l3.500-2l3 2v5z" fill="#dcdcdc" stroke="#1a1a1a" stroke-width="0.700"></path><path d="M5 9c1-3 5-3 6.500 0" stroke="#f4f4f4" stroke-width="1.200" fill="none"></path><circle cx="8" cy="6" r="1.600" fill="none" stroke="#111" stroke-width="0.800"></circle></svg>
<div class="a" style="left:877.0px;top:381.3px;width:44.6px;height:11.5px;background:linear-gradient(#767678,#6c6c6e);border-radius:1.500px 1.500px 0 0;border:0.6px solid #8c8c8e;border-bottom:none"></div>
<svg style="left:880px;top:382px" width="12" height="10" viewBox="0 0 12 10"><path d="M1 2.500l5-1.800l5 1.800l-5 1.800zM1 5l5-1.800l5 1.800l-5 1.800zM1 7.500l5-1.800l5 1.800l-5 1.800z" fill="#f4f4f4" stroke="#222" stroke-width="0.500"></path></svg>
<div class="t" style="left: 894.6px; top: 383.2px; font-size: 7.8px; color: rgb(220, 220, 220); transform: scaleX(0.7883);">レイヤー</div>
<div class="a" style="left:924.0px;top:382.0px;width:15.0px;height:10.0px;background:#555;border:0.5px solid #646464;border-radius:1px 1px 0 0"></div>
<svg style="left:926px;top:383px" width="12" height="8" viewBox="0 0 12 8"><path d="M1 6l3-4M4 6l3-4M7 6l3-4" stroke="#7c7c7c" stroke-width="1.100"></path></svg>
<div class="a" style="left:848.0px;top:392.5px;width:112.0px;height:245.5px;background:#7a7b7f;border:0.5px solid #58585a"></div>
<div class="a" style="left:850.0px;top:395.4px;width:53.4px;height:12.0px;background:linear-gradient(#8a8a8a,#767676);border:0.5px solid #555;border-radius:2px"></div>
<div class="t" style="left: 864.9px; top: 396.8px; font-size: 8.5px; color: rgb(244, 244, 244); transform: scaleX(0.8874);">通常</div>
<svg style="left:896px;top:399px" width="7" height="5" viewBox="0 0 7 5"><path d="M0.500 0.600h5.600l-2.800 3.600z" fill="#2a2a2a"></path></svg>
<div class="a" style="left:907.9px;top:398.3px;width:26.5px;height:5.7px;background:#e2e2e2;border:0.5px solid #444;border-radius:1px"></div>
<div class="a" style="left:908.4px;top:401.3px;width:25.5px;height:2.2px;background:#b8b8b8"></div>
<div class="a" style="left:935.5px;top:395.5px;width:1.0px;height:12.0px;background:#5a5a5a"></div>
<div class="t" style="left: 939.6px; top: 397.3px; font-size: 8.3px; color: rgb(244, 244, 244); transform: scaleX(0.7729);">100</div>
<svg style="left:951px;top:396px" width="7" height="11" viewBox="0 0 7 11"><path d="M0.500 4.500h5.600l-2.800-3.800zM0.500 6.500h5.600l-2.800 3.800z" fill="#2a2a2a"></path></svg>
<svg style="left:0;top:0" width="960" height="662" viewBox="0 0 960 662"><ellipse cx="872" cy="415" rx="5" ry="3.600" fill="#101010"></ellipse><path d="M868 414c2-1.500 6-1.500 8 0" stroke="#777" stroke-width="0.800" fill="none"></path><path d="M885.200 410.500v4" stroke="#eee" stroke-width="1.500"></path><path d="M883.800 415h2.800v5h-2.800z" fill="#e8e8e8" stroke="#222" stroke-width="0.500"></path><circle cx="885.200" cy="410.500" r="1" fill="#222"></circle><rect x="892.800" y="414" width="8.800" height="6.800" fill="#e0e0e0" stroke="#1a1a1a" stroke-width="0.900"></rect><path d="M894.800 414v-2a2.400 2.400 0 0 1 4.800 0v2" stroke="#1a1a1a" stroke-width="1.100" fill="none"></path><rect x="895.300" y="415.800" width="3.800" height="3.200" fill="#8a8a8a"></rect><rect x="905.500" y="415" width="4.500" height="3.800" fill="#8c8c8c" stroke="#606060" stroke-width="0.500"></rect><path d="M906.500 415v-1.200a1.300 1.300 0 0 1 2.600 0v1.200" stroke="#606060" stroke-width="0.700" fill="none"></path><path d="M910.500 418l3-2.500M911.500 420l3-2.500" stroke="#8c8c8c" stroke-width="0.800"></path><rect x="917.400" y="409.300" width="18.600" height="11.700" rx="1.300" fill="#6a6a6a" stroke="#8a8a8a" stroke-width="0.500"></rect><rect x="919.500" y="411" width="9" height="7.500" fill="#e8e8e8" stroke="#333" stroke-width="0.500"></rect><path d="M920 413.500l3 3l5-5" stroke="#777" stroke-width="1"></path><ellipse cx="925.500" cy="418" rx="3" ry="1.800" fill="#111"></ellipse><path d="M930.800 414.500h4l-2 2.600z" fill="#222"></path><rect x="938.300" y="409.300" width="19.200" height="11.700" rx="1.300" fill="#6a6a6a" stroke="#8a8a8a" stroke-width="0.500"></rect><path d="M940.500 411v8.500h9.500z" fill="#3aa0e8" stroke="#0a3a7a" stroke-width="0.600"></path><path d="M940.500 411h9.500v8.500" fill="none" stroke="#0a3a7a" stroke-width="0.800"></path><path d="M946.500 415.500l4 4M950.500 415.500l-4 4" stroke="#e8141e" stroke-width="1.400"></path><path d="M952.800 414.500h4l-2 2.600z" fill="#222"></path></svg>
<div class="a" style="left:850.0px;top:423.2px;width:101.0px;height:199.3px;background:#7a7b7f;border-top:0.5px solid #58585a"></div>
<div class="a" style="left:951.0px;top:423.2px;width:6.0px;height:199.3px;background:#616163;border-left:0.8px solid #545456"></div>
<div class="a" style="left:957.0px;top:423.2px;width:3.0px;height:199.3px;background:#7a7a7c"></div>
<div class="a" style="left:876.6px;top:442.0px;width:74.4px;height:25.9px;background:linear-gradient(#7595ab,#6a8aa0)"></div>
<div class="a" style="left:848.5px;top:622.5px;width:111.0px;height:14.0px;background:linear-gradient(#6c6c6c,#747474);border-top:0.5px solid #5a5a5a"></div>
<div class="a" style="left:850.0px;top:441.6px;width:101.0px;height:0.9px;background:#4e4e50"></div>
<div class="a" style="left:850.0px;top:442.5px;width:101.0px;height:0.6px;background:#848588"></div>
<div class="a" style="left:885.6px;top:467.5px;width:65.4px;height:0.9px;background:#4e4e50"></div>
<div class="a" style="left:885.6px;top:468.4px;width:65.4px;height:0.6px;background:#848588"></div>
<div class="a" style="left:885.6px;top:493.8px;width:65.4px;height:0.9px;background:#4e4e50"></div>
<div class="a" style="left:885.6px;top:494.7px;width:65.4px;height:0.6px;background:#848588"></div>
<div class="a" style="left:850.0px;top:520.6px;width:101.0px;height:0.9px;background:#4e4e50"></div>
<div class="a" style="left:850.0px;top:521.5px;width:101.0px;height:0.6px;background:#848588"></div>
<div class="a" style="left:850.0px;top:547.0px;width:101.0px;height:0.9px;background:#4e4e50"></div>
<div class="a" style="left:850.0px;top:547.9px;width:101.0px;height:0.6px;background:#848588"></div>
<div class="a" style="left:850.0px;top:572.7px;width:101.0px;height:0.9px;background:#4e4e50"></div>
<div class="a" style="left:850.0px;top:573.6px;width:101.0px;height:0.6px;background:#848588"></div>
<div class="a" style="left:864.6px;top:423.2px;width:0.7px;height:150.0px;background:#5c5c5c"></div>
<div class="a" style="left:876.2px;top:423.2px;width:0.7px;height:150.0px;background:#5c5c5c"></div>
<div class="a" style="left:850.0px;top:423.2px;width:0.7px;height:150.0px;background:#5c5c5c"></div>
<svg style="left:0;top:0" width="960" height="662" viewBox="0 0 960 662"><path d="M853.1 433.0c1.800-2.800 6.400-2.800 8.200 0c-1.800 2.600-6.400 2.600-8.200 0z" fill="#f0f0f0" stroke="#1a1a1a" stroke-width="0.500"></path><circle cx="857.2" cy="432.9" r="1.900" fill="#111"></circle><circle cx="856.6" cy="432.3" r="0.600" fill="#ddd"></circle><path d="M853.1 455.0c1.800-2.800 6.400-2.800 8.200 0c-1.800 2.600-6.400 2.600-8.200 0z" fill="#f0f0f0" stroke="#1a1a1a" stroke-width="0.500"></path><circle cx="857.2" cy="454.9" r="1.900" fill="#111"></circle><circle cx="856.6" cy="454.3" r="0.600" fill="#ddd"></circle><path d="M853.1 481.0c1.800-2.800 6.400-2.800 8.200 0c-1.800 2.600-6.400 2.600-8.200 0z" fill="#f0f0f0" stroke="#1a1a1a" stroke-width="0.500"></path><circle cx="857.2" cy="480.9" r="1.900" fill="#111"></circle><circle cx="856.6" cy="480.3" r="0.600" fill="#ddd"></circle><path d="M853.1 507.5c1.800-2.800 6.400-2.800 8.200 0c-1.800 2.600-6.400 2.600-8.200 0z" fill="#f0f0f0" stroke="#1a1a1a" stroke-width="0.500"></path><circle cx="857.2" cy="507.4" r="1.900" fill="#111"></circle><circle cx="856.6" cy="506.8" r="0.600" fill="#ddd"></circle><path d="M853.1 534.2c1.800-2.800 6.400-2.800 8.200 0c-1.800 2.600-6.400 2.600-8.200 0z" fill="#f0f0f0" stroke="#1a1a1a" stroke-width="0.500"></path><circle cx="857.2" cy="534.1" r="1.900" fill="#111"></circle><circle cx="856.6" cy="533.5" r="0.600" fill="#ddd"></circle><path d="M853.1 560.3c1.800-2.800 6.400-2.800 8.200 0c-1.800 2.600-6.400 2.600-8.200 0z" fill="#f0f0f0" stroke="#1a1a1a" stroke-width="0.500"></path><circle cx="857.2" cy="560.2" r="1.900" fill="#111"></circle><circle cx="856.6" cy="559.6" r="0.600" fill="#ddd"></circle><path d="M877.9 433.1h5.600l-2.800 3.400z" fill="#f4f4f4"></path><path d="M888.700 430.300h3l1 1.100h4.300v5h-8.300z" fill="#d8d4b4" stroke="#33301c" stroke-width="0.600"></path><path d="M888.700 436.400l2-3.600h7.800l-2 3.600z" fill="#f4f0d4" stroke="#33301c" stroke-width="0.500"></path><path d="M866.300 457.800c2.500-0.300 4.800-2.300 6-5.300c-1 3.800-3 5.800-6 5.300z" fill="#1e1e1e" stroke="#1e1e1e" stroke-width="0.700"></path><path d="M866.800 457.300c2-0.600 3.800-2 5-4" stroke="#d8d8d8" stroke-width="0.500" fill="none"></path><path d="M887.9 454.3h5.600l-2.800 3.400z" fill="#f4f4f4"></path><rect x="897" y="448.2" width="13" height="13.600" fill="#f6f6f6" stroke="#222" stroke-width="0.700"></rect><path d="M899 450.2h9M899 452.2h3.500v3.500h-3.500zM904 453.2h4.500M904 455.3h4.500M899 458.3h9" stroke="#555" stroke-width="0.700" fill="none"></path><path d="M903.500 454.5h5.500v5.500h-5.500z" fill="#bbb" stroke="#444" stroke-width="0.500"></path><path d="M911.500 455.3l1.800 2.200l3.500-4.400" stroke="#111" stroke-width="1.100" fill="none"></path><rect x="919.700" y="443.6" width="17" height="22.700" fill="#050505"></rect><path d="M923.300 448.3h10.300v6.200l-10.300 1.200z" fill="#fff"></path><rect x="939.600" y="450.2" width="9.600" height="9.600" fill="#3d9be6" stroke="#123f80" stroke-width="0.700"></rect><path d="M941 451.2h7v7" fill="none" stroke="#d8ecff" stroke-width="0.800"></path><path d="M941.500 451.0l8.500 8.500M950 451.0l-8.500 8.500" stroke="#e8141e" stroke-width="1.500"></path><circle cx="947.500" cy="457.0" r="2.200" fill="#bcbcbc" opacity="0.850"></circle><path d="M887.9 480.3h5.600l-2.800 3.400z" fill="#f4f4f4"></path><rect x="897" y="474.2" width="13" height="13.600" fill="#f6f6f6" stroke="#222" stroke-width="0.700"></rect><path d="M899 476.2h9M899 478.2h3.500v3.500h-3.500zM904 479.2h4.500M904 481.3h4.500M899 484.3h9" stroke="#555" stroke-width="0.700" fill="none"></path><path d="M903.500 480.5h5.500v5.500h-5.500z" fill="#bbb" stroke="#444" stroke-width="0.500"></path><path d="M911.500 481.3l1.800 2.200l3.500-4.400" stroke="#111" stroke-width="1.100" fill="none"></path><rect x="919.700" y="469.6" width="17" height="22.700" fill="#050505"></rect><path d="M923.300 481.6l10.300-1.200v2.300l-10.300-0.200z" fill="#fff"></path><rect x="939.600" y="476.2" width="9.600" height="9.600" fill="#3d9be6" stroke="#123f80" stroke-width="0.700"></rect><path d="M941 477.2h7v7" fill="none" stroke="#d8ecff" stroke-width="0.800"></path><path d="M941.500 477.0l8.500 8.500M950 477.0l-8.500 8.500" stroke="#e8141e" stroke-width="1.500"></path><circle cx="947.500" cy="483.0" r="2.200" fill="#bcbcbc" opacity="0.850"></circle><path d="M887.9 506.8h5.600l-2.800 3.400z" fill="#f4f4f4"></path><rect x="897" y="500.7" width="13" height="13.600" fill="#f6f6f6" stroke="#222" stroke-width="0.700"></rect><path d="M899 502.7h9M899 504.7h3.500v3.500h-3.500zM904 505.7h4.500M904 507.8h4.500M899 510.8h9" stroke="#555" stroke-width="0.700" fill="none"></path><path d="M903.500 507.0h5.500v5.500h-5.500z" fill="#bbb" stroke="#444" stroke-width="0.500"></path><path d="M911.500 507.8l1.800 2.200l3.500-4.400" stroke="#111" stroke-width="1.100" fill="none"></path><rect x="919.700" y="496.1" width="17" height="22.700" fill="#050505"></rect><path d="M923.300 509.0l10.300 0.200v6h-10.300z" fill="#fff"></path><rect x="939.600" y="502.7" width="9.600" height="9.600" fill="#3d9be6" stroke="#123f80" stroke-width="0.700"></rect><path d="M941 503.7h7v7" fill="none" stroke="#d8ecff" stroke-width="0.800"></path><path d="M941.500 503.5l8.500 8.500M950 503.5l-8.500 8.500" stroke="#e8141e" stroke-width="1.500"></path><circle cx="947.500" cy="509.5" r="2.200" fill="#bcbcbc" opacity="0.850"></circle><rect x="880.100" y="523.300" width="16.300" height="21.600" fill="#fff" stroke="#2a2a2a" stroke-width="0.800"></rect><path d="M880.10 523.30h2.330v2.400h-2.330zM884.76 523.30h2.330v2.400h-2.330zM889.42 523.30h2.330v2.400h-2.330zM894.08 523.30h2.330v2.400h-2.330zM882.43 525.70h2.330v2.400h-2.330zM887.09 525.70h2.330v2.400h-2.330zM891.75 525.70h2.330v2.400h-2.330zM880.10 528.10h2.330v2.400h-2.330zM884.76 528.10h2.330v2.400h-2.330zM889.42 528.10h2.330v2.400h-2.330zM894.08 528.10h2.330v2.400h-2.330zM882.43 530.50h2.330v2.400h-2.330zM887.09 530.50h2.330v2.400h-2.330zM891.75 530.50h2.330v2.400h-2.330zM880.10 532.90h2.330v2.400h-2.330zM884.76 532.90h2.330v2.400h-2.330zM889.42 532.90h2.330v2.400h-2.330zM894.08 532.90h2.330v2.400h-2.330zM882.43 535.30h2.330v2.400h-2.330zM887.09 535.30h2.330v2.400h-2.330zM891.75 535.30h2.330v2.400h-2.330zM880.10 537.70h2.330v2.400h-2.330zM884.76 537.70h2.330v2.400h-2.330zM889.42 537.70h2.330v2.400h-2.330zM894.08 537.70h2.330v2.400h-2.330zM882.43 540.10h2.330v2.400h-2.330zM887.09 540.10h2.330v2.400h-2.330zM891.75 540.10h2.330v2.400h-2.330zM880.10 542.50h2.330v2.400h-2.330zM884.76 542.50h2.330v2.400h-2.330zM889.42 542.50h2.330v2.400h-2.330zM894.08 542.50h2.330v2.400h-2.330z" fill="#d4d4d4"></path><rect x="880.100" y="549.500" width="16.300" height="21.300" fill="#fff" stroke="#2a2a2a" stroke-width="0.800" rx="0.800"></rect><rect x="900.300" y="549" width="13.300" height="12" fill="#f4f4f4" stroke="#222" stroke-width="0.700"></rect><path d="M903.300 551h5l2.500 2.500v5.800h-7.500z" fill="#fff" stroke="#222" stroke-width="0.700"></path><path d="M908.300 551v2.500h2.500" fill="none" stroke="#222" stroke-width="0.600"></path><path d="M859 625h8.400v6l-2.500 2.700h-5.900z" fill="#f6f6f6" stroke="#222" stroke-width="0.700"></path><path d="M867.400 631h-2.500v2.700" fill="none" stroke="#222" stroke-width="0.600"></path><path d="M871 625h7.500v8.700h-7.500z" fill="#f6f6f6" stroke="#222" stroke-width="0.700"></path><path d="M876 630.500h4.500v2l2-0.200l-3.300 2.700l-3.200-2.700l0 0z" fill="#9a9a9a" stroke="#333" stroke-width="0.400"></path><path d="M883.500 626h3l1 1.200h4v6.500h-8z" fill="#9c9c9c" stroke="#333" stroke-width="0.600"></path><rect x="888" y="628.500" width="6.500" height="5.500" fill="#f0f0f0" stroke="#333" stroke-width="0.600"></rect><path d="M901.7 625.500v7M898.9 628.500l2.800 4.500l2.800-4.500" stroke="#5e5e5e" stroke-width="1.400" fill="none"></path><path d="M898.2 634h7" stroke="#5e5e5e" stroke-width="1"></path><path d="M913.5 625.500v7M910.7 628.500l2.800 4.500l2.800-4.500" stroke="#5e5e5e" stroke-width="1.400" fill="none"></path><path d="M910.0 634h7" stroke="#5e5e5e" stroke-width="1"></path><rect x="921.500" y="626" width="8.500" height="7" fill="#8a8a8a" stroke="#5e5e5e" stroke-width="0.600"></rect><circle cx="925.700" cy="629.500" r="1.800" fill="#5e5e5e"></circle><path d="M935 625.500v8.500M935 626h4l4 3.500h-4M939 631l4 2" stroke="#5e5e5e" stroke-width="1.200" fill="none"></path><path d="M948.500 627.500h7.800l-1 7h-5.800z" fill="#f6f6f6" stroke="#222" stroke-width="0.800"></path><ellipse cx="952.400" cy="627" rx="4.300" ry="1.400" fill="#dedede" stroke="#222" stroke-width="0.700"></ellipse><path d="M950.600 625.600c0-1.400 3.600-1.400 3.600 0" stroke="#222" stroke-width="0.700" fill="none"></path><path d="M951 629.500v4M952.400 629.500v4M953.800 629.500v4" stroke="#777" stroke-width="0.500"></path></svg>
<div class="t" style="left: 902px; top: 424.9px; font-size: 8.3px; color: rgb(240, 240, 240); transform: scaleX(0.8474);">100 %通常</div>
<div class="t" style="left: 902px; top: 432.9px; font-size: 8.3px; color: rgb(240, 240, 240); transform: scaleX(0.5985);">1コマ</div>
<div class="t" style="left: 899.9px; top: 524.4px; font-size: 8.3px; color: rgb(240, 240, 240); transform: scaleX(0.8125);">100 %通常</div>
<div class="t" style="left: 899.9px; top: 536.6px; font-size: 8.3px; color: rgb(240, 240, 240); transform: scaleX(0.7301);">レイヤー 1</div>
<div class="t" style="left: 899.9px; top: 562.3px; font-size: 8.3px; color: rgb(240, 240, 240); transform: scaleX(0.8248);">用紙</div>
<div class="a" style="left:848.0px;top:637.8px;width:112.0px;height:11.3px;background:linear-gradient(#565656,#454545 50%,#3e3e3e);border-top:0.5px solid #6a6a6a"></div>
<div class="a" style="left:848.8px;top:638.8px;width:9.5px;height:9.5px;background:#4a4a4a;border:0.5px solid #5e5e5e"></div>
<svg style="left:849px;top:639px" width="10" height="9" viewBox="0 0 10 9"><path d="M2.300 2.300l2.300 2l-2.300 2z" fill="#8e8e8e"></path><path d="M5.300 2.500h3M5.300 4.300h3M5.300 6.100h3" stroke="#8e8e8e" stroke-width="0.800"></path></svg>
<div class="a" style="left:859.5px;top:638.5px;width:32.1px;height:11.0px;background:linear-gradient(#767678,#6c6c6e);border-radius:1.500px 1.500px 0 0;border:0.6px solid #8c8c8e;border-bottom:none"></div>
<svg style="left:863px;top:638.500px" width="11" height="11" viewBox="0 0 11 11"><circle cx="5.300" cy="5.500" r="4.700" fill="#0e0e0e"></circle><circle cx="5.300" cy="3" r="0.950" fill="#f4f4f4"></circle><path d="M4.200 4.700h2v3.300h0.800v0.800h-3.400v-0.800h0.800v-2.500h-0.500z" fill="#f4f4f4"></path></svg>
<div class="t" style="left: 876.7px; top: 640.3px; font-size: 7.8px; color: rgb(220, 220, 220); transform: scaleX(0.7824);">情報</div>
<div class="a" style="left:848.0px;top:649.2px;width:112.0px;height:12.8px;background:#77787c"></div>
<div class="t" style="left: 848.7px; top: 651.9px; font-size: 8.3px; color: rgb(240, 240, 240); transform: scaleX(0.781);">システム:22%</div>
<div class="t" style="left: 892.7px; top: 651.9px; font-size: 8.3px; color: rgb(240, 240, 240); transform: scaleX(0.6568);">アプリケーション:</div>
<div class="t" style="left: 941px; top: 651.9px; font-size: 8.3px; color: rgb(240, 240, 240); transform: scaleX(0.6667);">9%</div>
</div>
</body></html>
